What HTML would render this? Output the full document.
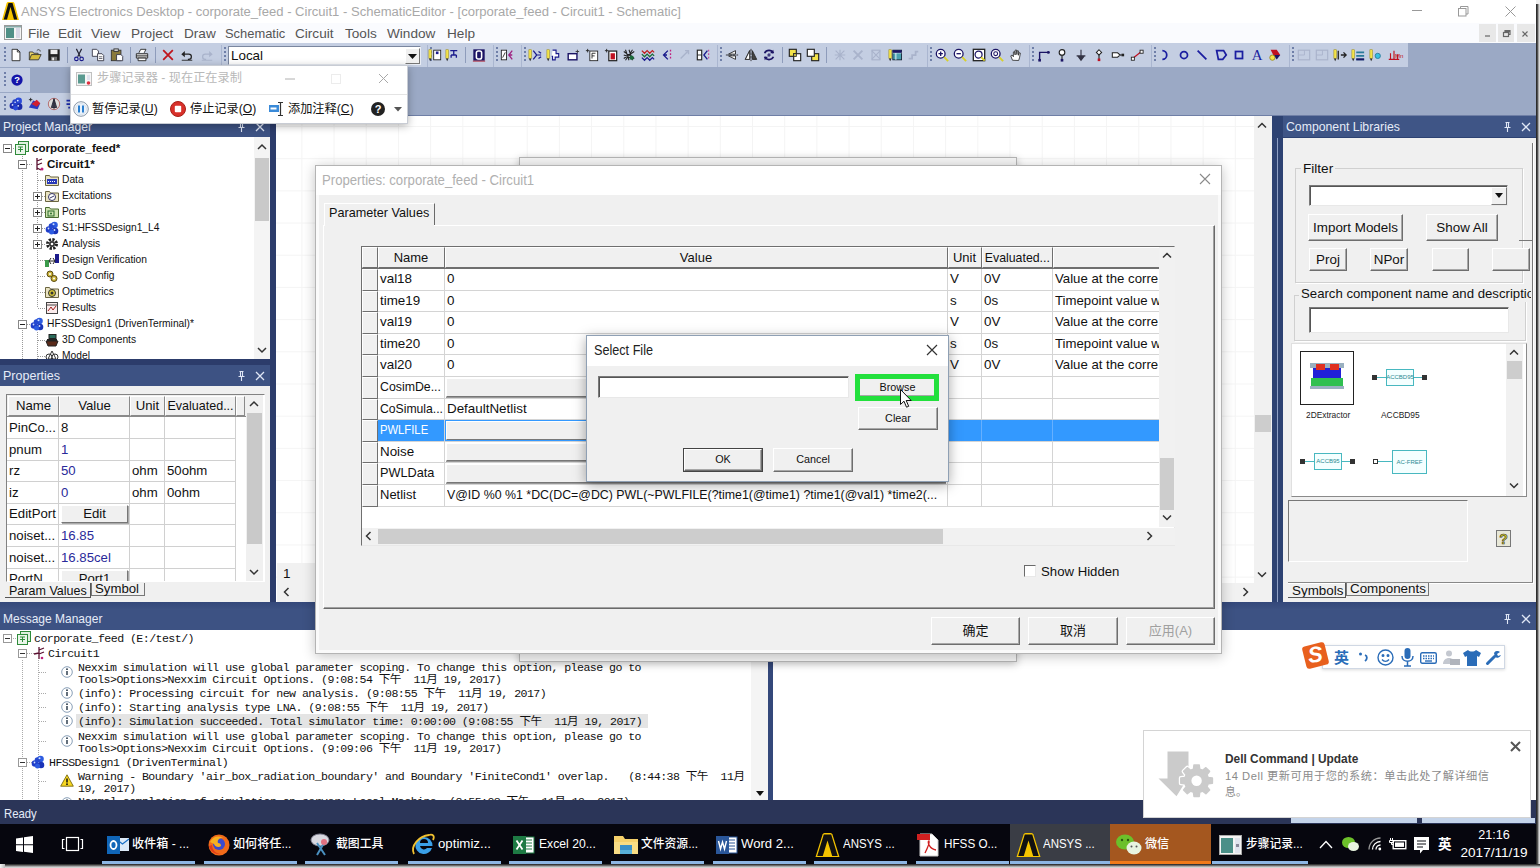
<!DOCTYPE html>
<html><head><meta charset="utf-8"><title>ANSYS Electronics Desktop</title>
<style>
*{box-sizing:border-box;margin:0;padding:0}
html,body{width:1540px;height:868px;overflow:hidden;background:#9aa8c6}
body{font-family:"Liberation Sans","Noto Sans CJK SC",sans-serif;font-size:13px;color:#111;position:relative}
.a{position:absolute}
.t{position:absolute;white-space:pre;line-height:1}
svg{position:absolute;overflow:visible}
.mn{top:27px;font-size:13.6px;color:#555}
</style></head><body>
<!-- 01_title.html -->
<div class="a" style="left:0;top:0;width:1540px;height:23px;background:#fff"></div>
<svg style="left:2px;top:2px" width="17" height="18" viewBox="0 0 17 18"><path d="M4.500 1.500C5 .3 5.500 0 6.500 0h4c1 0 1.500.3 2 1.500L17 18H0z" fill="#f5c400"/><path d="M6.500 1h4l4.800 16.500h-3.300L8.500 5 5 17.500H1.700z" fill="#111"/></svg>
<div class="t" style="left:21px;top:5px;font-size:13.05px;color:#a8a8a8">ANSYS Electronics Desktop - corporate_feed - Circuit1 - SchematicEditor - [corporate_feed - Circuit1 - Schematic]</div>
<svg style="left:1412px;top:5px" width="110" height="12" viewBox="0 0 110 12" fill="none" stroke="#999" stroke-width="1"><path d="M0 5.500h10"/><rect x="46.500" y="3.500" width="7.500" height="7.500"/><path d="M48.500 3.500v-2h7.500v7.500h-2"/><path d="M93.500 1.500l10 10M103.500 1.500l-10 10"/></svg>

<!-- 02_menu.html -->
<div class="a" style="left:0;top:23px;width:1540px;height:20px;background:#fafbfe"></div>
<svg style="left:4px;top:25px" width="18" height="15" viewBox="0 0 18 15"><rect x="0.500" y="0.500" width="17" height="14" fill="#f4f4f4" stroke="#999"/><rect x="2" y="3" width="8" height="10" fill="#4f8f86"/><rect x="12" y="3" width="4" height="10" fill="#d8d8e6"/><rect x="1" y="1" width="16" height="1.500" fill="#8aa"/></svg>
<div class="t mn" style="left:28px">File</div><div class="t mn" style="left:58px">Edit</div><div class="t mn" style="left:91px">View</div><div class="t mn" style="left:131px">Project</div><div class="t mn" style="left:184px">Draw</div><div class="t mn" style="left:225px;transform:scaleX(.95);transform-origin:0 0">Schematic</div><div class="t mn" style="left:295px">Circuit</div><div class="t mn" style="left:345px">Tools</div><div class="t mn" style="left:387px">Window</div><div class="t mn" style="left:447px">Help</div>
<div class="a" style="left:1479px;top:24px;width:17px;height:18px;background:#e8e8e8"></div><div class="a" style="left:1498px;top:24px;width:16px;height:18px;background:#e8e8e8"></div><div class="a" style="left:1517px;top:24px;width:18px;height:18px;background:#e8e8e8"></div>
<svg style="left:1479px;top:24px" width="56" height="18" viewBox="0 0 56 18" fill="none" stroke="#666" stroke-width="1.200"><path d="M6 12h5"/><rect x="24.500" y="8.500" width="5" height="4"/><path d="M26 8.500v-2h5v4h-1.500M26 7.300h5"/><path d="M43.500 7.500l5 5M48.500 7.500l-5 5"/></svg>

<!-- 03_toolbars.html -->
<div class="a" style="left:0;top:43px;width:1540px;height:75px;background:#9ba9c5"></div>
<div class="a" style="left:0;top:43px;width:1408px;height:24px;background:#c4cee2"></div>
<div class="a" style="left:0;top:68px;width:30px;height:24px;background:#c4cee2"></div>
<div class="a" style="left:0;top:93px;width:80px;height:22px;background:#c4cee2"></div>
<div class="a" style="left:221px;top:45px;width:1px;height:22px;background:#aab6d0"></div>
<div class="a" style="left:427px;top:45px;width:1px;height:22px;background:#aab6d0"></div>
<div class="a" style="left:493px;top:45px;width:1px;height:22px;background:#aab6d0"></div>
<div class="a" style="left:521px;top:45px;width:1px;height:22px;background:#aab6d0"></div>
<div class="a" style="left:717px;top:45px;width:1px;height:22px;background:#aab6d0"></div>
<div class="a" style="left:927px;top:45px;width:1px;height:22px;background:#aab6d0"></div>
<div class="a" style="left:1029px;top:45px;width:1px;height:22px;background:#aab6d0"></div>
<div class="a" style="left:1151px;top:45px;width:1px;height:22px;background:#aab6d0"></div>
<div class="a" style="left:1289px;top:45px;width:1px;height:22px;background:#aab6d0"></div>
<div class="a" style="left:4px;top:47px;width:2px;height:16px;background:repeating-linear-gradient(#6f7fa8 0 2px,transparent 2px 4px)"></div>
<div class="a" style="left:224px;top:47px;width:2px;height:16px;background:repeating-linear-gradient(#6f7fa8 0 2px,transparent 2px 4px)"></div>
<div class="a" style="left:430px;top:47px;width:2px;height:16px;background:repeating-linear-gradient(#6f7fa8 0 2px,transparent 2px 4px)"></div>
<div class="a" style="left:496px;top:47px;width:2px;height:16px;background:repeating-linear-gradient(#6f7fa8 0 2px,transparent 2px 4px)"></div>
<div class="a" style="left:524px;top:47px;width:2px;height:16px;background:repeating-linear-gradient(#6f7fa8 0 2px,transparent 2px 4px)"></div>
<div class="a" style="left:720px;top:47px;width:2px;height:16px;background:repeating-linear-gradient(#6f7fa8 0 2px,transparent 2px 4px)"></div>
<div class="a" style="left:930px;top:47px;width:2px;height:16px;background:repeating-linear-gradient(#6f7fa8 0 2px,transparent 2px 4px)"></div>
<div class="a" style="left:1032px;top:47px;width:2px;height:16px;background:repeating-linear-gradient(#6f7fa8 0 2px,transparent 2px 4px)"></div>
<div class="a" style="left:1154px;top:47px;width:2px;height:16px;background:repeating-linear-gradient(#6f7fa8 0 2px,transparent 2px 4px)"></div>
<div class="a" style="left:1292px;top:47px;width:2px;height:16px;background:repeating-linear-gradient(#6f7fa8 0 2px,transparent 2px 4px)"></div>
<div class="a" style="left:4px;top:72px;width:2px;height:16px;background:repeating-linear-gradient(#6f7fa8 0 2px,transparent 2px 4px)"></div>
<div class="a" style="left:4px;top:96px;width:2px;height:16px;background:repeating-linear-gradient(#6f7fa8 0 2px,transparent 2px 4px)"></div>
<div class="a" style="left:67px;top:47px;width:1px;height:16px;background:#8e9cbb"></div>
<div class="a" style="left:130px;top:47px;width:1px;height:16px;background:#8e9cbb"></div>
<div class="a" style="left:155px;top:47px;width:1px;height:16px;background:#8e9cbb"></div>
<div class="a" style="left:465px;top:47px;width:1px;height:16px;background:#8e9cbb"></div>
<div class="a" style="left:782px;top:47px;width:1px;height:16px;background:#8e9cbb"></div>
<div class="a" style="left:826px;top:47px;width:1px;height:16px;background:#8e9cbb"></div>
<svg style="left:9px;top:48px" width="14" height="14" viewBox="0 0 16 16"><path d="M3.500 1.500h6l3 3v10h-9z" fill="#fff" stroke="#222"/><path d="M9.500 1.500v3h3" fill="none" stroke="#222"/></svg>
<svg style="left:28px;top:48px" width="14" height="14" viewBox="0 0 16 16"><path d="M1.500 13.500v-9h4l1 1.500h5v2" fill="#e8d36a" stroke="#333"/><path d="M1.500 13.500l2.500-6h11l-3 6z" fill="#d6bd3c" stroke="#333"/><path d="M10 3c2-2 4-1 4 1" fill="none" stroke="#333"/></svg>
<svg style="left:47px;top:48px" width="14" height="14" viewBox="0 0 16 16"><rect x="1.500" y="1.500" width="13" height="13" fill="#222"/><rect x="4" y="2" width="8" height="5" fill="#eee"/><rect x="4.500" y="10" width="7" height="4.500" fill="#777"/><rect x="6" y="11" width="2" height="3" fill="#eee"/></svg>
<svg style="left:72px;top:48px" width="14" height="14" viewBox="0 0 16 16"><path d="M5 1l4.500 9M11 1l-4.500 9" stroke="#223" stroke-width="1.300" fill="none"/><circle cx="5" cy="12.500" r="2" fill="none" stroke="#1a1a8c" stroke-width="1.300"/><circle cx="11" cy="12.500" r="2" fill="none" stroke="#1a1a8c" stroke-width="1.300"/></svg>
<svg style="left:91px;top:48px" width="14" height="14" viewBox="0 0 16 16"><path d="M1.500 1.500h5l2 2v6h-7z" fill="#fff" stroke="#334"/><path d="M7.500 6.500h5l2 2v6h-7z" fill="#fff" stroke="#334"/><path d="M9 10h4M9 12h4" stroke="#334" stroke-width=".8"/></svg>
<svg style="left:110px;top:48px" width="14" height="14" viewBox="0 0 16 16"><rect x="1.500" y="2.500" width="11" height="12" fill="#8a7a3a" stroke="#333"/><rect x="4.500" y="1" width="5" height="3" fill="#ccc" stroke="#333"/><path d="M7.500 7.500h5l2 2v5h-7z" fill="#fff" stroke="#334"/></svg>
<svg style="left:135px;top:48px" width="14" height="14" viewBox="0 0 16 16"><path d="M4.500 5.500l2-4h6l-2 4" fill="#fff" stroke="#222"/><path d="M1.500 6.500h13v5h-13z" fill="#ddd" stroke="#222"/><path d="M3.500 11.500h9v3h-9z" fill="#fff" stroke="#222"/><path d="M1.500 9h13" stroke="#222"/></svg>
<svg style="left:161px;top:48px" width="14" height="14" viewBox="0 0 16 16"><path d="M2.500 2.500l11 11M13.500 2.500l-11 11" stroke="#c0141c" stroke-width="2" fill="none"/></svg>
<svg style="left:180px;top:48px" width="14" height="14" viewBox="0 0 16 16"><path d="M4 7h6a3 3 0 0 1 0 6h-1" fill="none" stroke="#222" stroke-width="1.400"/><path d="M1.500 7l4-3.500v7z" fill="#222"/><path d="M2 14h12" stroke="#222"/></svg>
<svg style="left:200px;top:48px" width="14" height="14" viewBox="0 0 16 16"><path d="M12 7h-6a3 3 0 0 0 0 6h1" fill="none" stroke="#a9b3cb" stroke-width="1.400"/><path d="M14.500 7l-4-3.500v7z" fill="#a9b3cb"/><path d="M2 14h12" stroke="#a9b3cb"/></svg>
<svg style="left:428px;top:48px" width="14" height="14" viewBox="0 0 16 16"><rect x="1" y="2" width="3" height="10" fill="#f3e34a" stroke="#998a20" stroke-width=".6"/><path d="M1 12l1.500 3 1.500-3z" fill="#333"/><rect x="6.500" y="2.500" width="8" height="11" fill="#fff" stroke="#222"/><rect x="9" y="4" width="3" height="3" fill="#1a1a8c"/></svg>
<svg style="left:445px;top:48px" width="14" height="14" viewBox="0 0 16 16"><rect x="1" y="2" width="3" height="10" fill="#f3e34a" stroke="#998a20" stroke-width=".6"/><path d="M1 12l1.500 3 1.500-3z" fill="#333"/><path d="M6 3h8M10 3v5M7 8h6M7 8v3M13 8v3" stroke="#1a1a8c" stroke-width="1.500" fill="none"/></svg>
<svg style="left:472px;top:48px" width="14" height="14" viewBox="0 0 16 16"><rect x="1.500" y="1.500" width="13" height="13" fill="#1b1464"/><rect x="5" y="3.500" width="6" height="9" rx="2" fill="none" stroke="#fff" stroke-width="1.800"/><path d="M1 15h14" stroke="#b02030"/></svg>
<svg style="left:500px;top:48px" width="14" height="14" viewBox="0 0 16 16"><rect x="1.500" y="2.500" width="6" height="11" fill="#fff" stroke="#222"/><path d="M3 11l3-6" stroke="#222"/><path d="M14 3l-4 5 4 5M10 8h4" stroke="#a02080" stroke-width="1.500" fill="none"/></svg>
<svg style="left:528px;top:48px" width="14" height="14" viewBox="0 0 16 16"><rect x="1" y="2" width="3" height="10" fill="#f3e34a" stroke="#998a20" stroke-width=".6"/><path d="M1 12l1.500 3 1.500-3z" fill="#333"/><path d="M6 3l4 5-4 5M10 8h5M12 4l3 2M12 12l3-2" stroke="#1a1a8c" stroke-width="1.400" fill="none"/></svg>
<svg style="left:546px;top:48px" width="14" height="14" viewBox="0 0 16 16"><rect x="1" y="2" width="3" height="10" fill="#f3e34a" stroke="#998a20" stroke-width=".6"/><path d="M1 12l1.500 3 1.500-3z" fill="#333"/><path d="M7.500 2.500h4v4h3v4h-4v3h-3v-4h-1" fill="#fff" stroke="#1a1a8c" stroke-width="1.300"/></svg>
<svg style="left:566px;top:48px" width="14" height="14" viewBox="0 0 16 16"><rect x="2.500" y="6.500" width="10" height="7" fill="#fff" stroke="#1b1464" stroke-width="1.600"/><path d="M13 2v4M11 4h4" stroke="#333" stroke-width="1"/></svg>
<svg style="left:585px;top:48px" width="14" height="14" viewBox="0 0 16 16"><rect x="5.500" y="3.500" width="9" height="11" fill="#fff" stroke="#222"/><path d="M8 6h4M8 9h3M8 6v6" stroke="#222"/><path d="M1 3h4M3 1v4" stroke="#222"/></svg>
<svg style="left:604px;top:48px" width="14" height="14" viewBox="0 0 16 16"><rect x="5.500" y="3.500" width="9" height="11" fill="#fff" stroke="#222" stroke-width="1.400"/><rect x="7.500" y="6" width="5" height="7" fill="#c01020"/><path d="M1 3h4M3 1v4" stroke="#222"/></svg>
<svg style="left:622px;top:48px" width="14" height="14" viewBox="0 0 16 16"><path d="M2 4l12 8M2 8l12 4M2 12l12-8M4 2l4 12M8 2l4 12M12 2l-8 12" stroke="#222" stroke-width="1.200" fill="none"/><circle cx="11" cy="11" r="2.500" fill="#1a6a3a"/></svg>
<svg style="left:641px;top:48px" width="14" height="14" viewBox="0 0 16 16"><path d="M1 3l3 3 3-3 3 3 3-3 2 2" stroke="#c02020" stroke-width="1.500" fill="none"/><path d="M1 7l3 3 3-3 3 3 3-3 2 2" stroke="#1a6a3a" stroke-width="1.500" fill="none"/><path d="M1 11l3 3 3-3 3 3 3-3 2 2" stroke="#1a1a8c" stroke-width="1.500" fill="none"/></svg>
<svg style="left:660px;top:48px" width="14" height="14" viewBox="0 0 16 16"><path d="M9 3l-5 5 5 5M4 8h4" stroke="#1a1a8c" stroke-width="1.500" fill="none"/><path d="M12 2v12" stroke="#c02080" stroke-dasharray="2 2" stroke-width="1.500"/></svg>
<svg style="left:678px;top:48px" width="14" height="14" viewBox="0 0 16 16"><path d="M3 12l8-8M8 3h4v4" stroke="#a9b3cb" stroke-width="1.600" fill="none"/></svg>
<svg style="left:696px;top:48px" width="14" height="14" viewBox="0 0 16 16"><rect x="1.500" y="2.500" width="5" height="11" fill="#fff" stroke="#222" stroke-width="1.300"/><path d="M1.500 8h5" stroke="#222"/><path d="M13 3l-4 5 4 5" stroke="#1a1a8c" stroke-width="1.500" fill="none"/><path d="M14.500 2v12" stroke="#c02080" stroke-dasharray="2 2"/></svg>
<svg style="left:725px;top:48px" width="14" height="14" viewBox="0 0 16 16"><path d="M1 8h14" stroke="#222" stroke-dasharray="3 1"/><path d="M12 3v4l-8 0zM12 13v-4l-8 0z" fill="#fff" stroke="#222"/></svg>
<svg style="left:744px;top:48px" width="14" height="14" viewBox="0 0 16 16"><path d="M8 1v14" stroke="#222" stroke-dasharray="3 1"/><path d="M6.500 3v10h-5zM9.500 3v10h5z" fill="#444" stroke="#222"/><path d="M6.500 3v10h-5z" fill="#fff" stroke="#222"/></svg>
<svg style="left:762px;top:48px" width="14" height="14" viewBox="0 0 16 16"><path d="M3 6a5.500 5.500 0 0 1 10 0M13 10a5.500 5.500 0 0 1-10 0" stroke="#1b1464" stroke-width="2" fill="none"/><path d="M13 2v4h-4zM3 14v-4h4z" fill="#1b1464"/><path d="M6 8h4M8 6v4" stroke="#1b1464" stroke-width="1.300"/></svg>
<svg style="left:788px;top:48px" width="14" height="14" viewBox="0 0 16 16"><rect x="1.500" y="1.500" width="8" height="8" fill="#f3e34a" stroke="#222" stroke-width="1.300"/><rect x="6.500" y="6.500" width="8" height="8" fill="#fff" stroke="#222" stroke-width="1.300"/><rect x="6.500" y="6.500" width="3" height="3" fill="#f3e34a" stroke="#222"/></svg>
<svg style="left:806px;top:48px" width="14" height="14" viewBox="0 0 16 16"><rect x="6.500" y="6.500" width="8" height="8" fill="#f3e34a" stroke="#222" stroke-width="1.300"/><rect x="1.500" y="1.500" width="8" height="8" fill="#fff" stroke="#222" stroke-width="1.300"/></svg>
<svg style="left:833px;top:48px" width="14" height="14" viewBox="0 0 16 16"><path d="M3 3l10 10M13 3l-10 10M8 2v12M2 8h12" stroke="#a9b3cb" stroke-width="1.300"/></svg>
<svg style="left:851px;top:48px" width="14" height="14" viewBox="0 0 16 16"><path d="M3 3l10 10M13 3l-10 10" stroke="#a9b3cb" stroke-width="2.200"/></svg>
<svg style="left:869px;top:48px" width="14" height="14" viewBox="0 0 16 16"><rect x="3.500" y="2.500" width="9" height="11" fill="none" stroke="#a9b3cb" stroke-width="1.300"/><path d="M3 3l10 10M13 3l-10 10" stroke="#a9b3cb" stroke-width="1.300"/></svg>
<svg style="left:888px;top:48px" width="14" height="14" viewBox="0 0 16 16"><rect x="1" y="2" width="3" height="10" fill="#f3e34a" stroke="#998a20" stroke-width=".6"/><path d="M1 12l1.500 3 1.500-3z" fill="#333"/><rect x="5.500" y="2.500" width="10" height="11" fill="#4aa0b0" stroke="#123"/><path d="M5.500 5.500h10M9 5.500v8" stroke="#fff"/><rect x="5.500" y="2.500" width="10" height="3" fill="#1b1464"/></svg>
<svg style="left:906px;top:48px" width="14" height="14" viewBox="0 0 16 16"><path d="M3 12h4v-4h4v-4h3" stroke="#a9b3cb" stroke-width="2" fill="none"/></svg>
<svg style="left:935px;top:48px" width="14" height="14" viewBox="0 0 16 16"><circle cx="6.500" cy="6.500" r="5" fill="#fff" stroke="#1b1464" stroke-width="1.500"/><path d="M4 6.500h5M6.500 4v5" stroke="#1b1464" stroke-width="1.500"/><path d="M10.500 10.500l4.500 4.500" stroke="#d8d02a" stroke-width="2.200"/></svg>
<svg style="left:953px;top:48px" width="14" height="14" viewBox="0 0 16 16"><circle cx="6.500" cy="6.500" r="5" fill="#fff" stroke="#1b1464" stroke-width="1.500"/><path d="M4 6.500h5" stroke="#1b1464" stroke-width="1.500"/><path d="M10.500 10.500l4.500 4.500" stroke="#d8d02a" stroke-width="2.200"/></svg>
<svg style="left:972px;top:48px" width="14" height="14" viewBox="0 0 16 16"><rect x="1.500" y="1.500" width="13" height="13" fill="#fff" stroke="#222" stroke-width="1.500"/><circle cx="7.500" cy="7.500" r="4" fill="#fff" stroke="#1b1464" stroke-width="1.400"/><path d="M10.500 10.500l4 4" stroke="#d8d02a" stroke-width="2.200"/></svg>
<svg style="left:990px;top:48px" width="14" height="14" viewBox="0 0 16 16"><circle cx="6.500" cy="6.500" r="5" fill="#fff" stroke="#1b1464" stroke-width="1.500"/><circle cx="6.500" cy="6.500" r="2.200" fill="none" stroke="#1b1464" stroke-width="1.200"/><path d="M10.500 10.500l4.500 4.500" stroke="#d8d02a" stroke-width="2.200"/></svg>
<svg style="left:1009px;top:48px" width="14" height="14" viewBox="0 0 16 16"><path d="M4 14l-2-5 1.500-1 1.500 2V4.500l1.300-.5.700 4V2.500l1.400-.3.600 5.300.500-4.500 1.300.300v5l1-3 1.200.500-1 5.500-1 3z" fill="#fff" stroke="#222" stroke-width=".9"/></svg>
<svg style="left:1037px;top:48px" width="14" height="14" viewBox="0 0 16 16"><path d="M3 14v-9h9" stroke="#1b1464" stroke-width="1.600" fill="none"/><circle cx="13" cy="5" r="1.700" fill="#1b1464"/><rect x="1.500" y="12.500" width="3" height="3" fill="#1b1464"/></svg>
<svg style="left:1055px;top:48px" width="14" height="14" viewBox="0 0 16 16"><circle cx="8" cy="5" r="3.200" fill="#fff" stroke="#222" stroke-width="1.300"/><path d="M8 8v6" stroke="#222" stroke-width="1.300"/><rect x="6.500" y="12.500" width="3" height="3" fill="#1b1464"/></svg>
<svg style="left:1074px;top:48px" width="14" height="14" viewBox="0 0 16 16"><path d="M8 2v11M3 9h10M5 10l3 4 3-4z" stroke="#334" stroke-width="1.300" fill="#334"/></svg>
<svg style="left:1092px;top:48px" width="14" height="14" viewBox="0 0 16 16"><path d="M8 2l3 3-3 3-3-3z" fill="#fff" stroke="#222" stroke-width="1.200"/><path d="M8 8v5" stroke="#222" stroke-width="1.300"/><rect x="6.500" y="12" width="3" height="3" fill="#c01020"/></svg>
<svg style="left:1111px;top:48px" width="14" height="14" viewBox="0 0 16 16"><path d="M1.500 5.500h6l3 2.500-3 2.500h-6z" fill="#fff" stroke="#222" stroke-width="1.200"/><path d="M10.500 8h2" stroke="#222"/><rect x="12" y="6.500" width="3" height="3" fill="#222"/></svg>
<svg style="left:1130px;top:48px" width="14" height="14" viewBox="0 0 16 16"><path d="M3 12l10-8" stroke="#c01020" stroke-width="1.400"/><rect x="1.500" y="10.500" width="3.500" height="3.500" fill="#fff" stroke="#222"/><rect x="11.500" y="2.500" width="3.500" height="3.500" fill="#fff" stroke="#222"/></svg>
<svg style="left:1158px;top:48px" width="14" height="14" viewBox="0 0 16 16"><path d="M5 3a5 5 0 0 1 0 10" fill="none" stroke="#1b1ea0" stroke-width="2"/></svg>
<svg style="left:1177px;top:48px" width="14" height="14" viewBox="0 0 16 16"><circle cx="8" cy="8" r="4" fill="none" stroke="#1b1ea0" stroke-width="2"/></svg>
<svg style="left:1195px;top:48px" width="14" height="14" viewBox="0 0 16 16"><path d="M3 3l10 10" stroke="#1b1ea0" stroke-width="2"/></svg>
<svg style="left:1214px;top:48px" width="14" height="14" viewBox="0 0 16 16"><path d="M3 3h8l3 5-4 5h-5z" fill="none" stroke="#1b1ea0" stroke-width="2"/></svg>
<svg style="left:1232px;top:48px" width="14" height="14" viewBox="0 0 16 16"><rect x="4" y="4" width="8" height="8" fill="none" stroke="#1b1ea0" stroke-width="2"/></svg>
<svg style="left:1250px;top:48px" width="14" height="14" viewBox="0 0 16 16"><text x="8" y="14" font-family="Liberation Serif,serif" font-size="17" text-anchor="middle" fill="#1b1ea0">A</text></svg>
<svg style="left:1268px;top:48px" width="14" height="14" viewBox="0 0 16 16"><path d="M3 2h7l4 6h-8z" fill="#c01020"/><path d="M6 8h8l-4 5z" fill="#1b1464"/><circle cx="5" cy="11" r="3" fill="#f3e34a" stroke="#998a20"/></svg>
<svg style="left:1297px;top:48px" width="14" height="14" viewBox="0 0 16 16"><rect x="1.500" y="2.500" width="13" height="11" fill="none" stroke="#a9b3cb" stroke-width="1.300"/><path d="M1.500 8h7v-5.500" stroke="#a9b3cb" fill="none"/></svg>
<svg style="left:1315px;top:48px" width="14" height="14" viewBox="0 0 16 16"><rect x="1.500" y="2.500" width="13" height="11" fill="none" stroke="#a9b3cb" stroke-width="1.300"/><path d="M1.500 8h7v-5.500" stroke="#a9b3cb" fill="none"/></svg>
<svg style="left:1333px;top:48px" width="14" height="14" viewBox="0 0 16 16"><rect x="1" y="2" width="3" height="10" fill="#f3e34a" stroke="#998a20" stroke-width=".6"/><path d="M1 12l1.500 3 1.500-3z" fill="#333"/><path d="M6 3v10M9 8h6M12 5l3 3-3 3" stroke="#222" stroke-width="1.500" fill="none"/></svg>
<svg style="left:1351px;top:48px" width="14" height="14" viewBox="0 0 16 16"><rect x="1" y="2" width="3" height="10" fill="#f3e34a" stroke="#998a20" stroke-width=".6"/><path d="M1 12l1.500 3 1.500-3z" fill="#333"/><path d="M6 5h9M6 9h9M6 13h9" stroke="#2a7a9a" stroke-width="2.200"/><path d="M6 13h9" stroke="#1b1464" stroke-width="2.200"/></svg>
<svg style="left:1369px;top:48px" width="14" height="14" viewBox="0 0 16 16"><rect x="1" y="2" width="3" height="10" fill="#f3e34a" stroke="#998a20" stroke-width=".6"/><path d="M1 12l1.500 3 1.500-3z" fill="#333"/><circle cx="10" cy="9" r="3" fill="#38c0e0" stroke="#2a7a9a"/></svg>
<svg style="left:1387px;top:48px" width="14" height="14" viewBox="0 0 16 16"><path d="M2 13h12M4 13V6M8 13V3M12 13V7" stroke="#c01020" stroke-width="1.300"/><text x="9" y="11" font-size="7" fill="#c01020" font-family="Liberation Sans,sans-serif">Mn</text></svg>
<div class="a" style="left:228px;top:46px;width:193px;height:19px;background:#fff;border:1px solid #7a869f;border-right-color:#e8ecf4;border-bottom-color:#e8ecf4"></div>
<div class="t" style="left:231px;top:49px;font-size:13.4px;color:#111">Local</div>
<div class="a" style="left:405px;top:48px;width:15px;height:16px;background:#f0f0f0;border:1px solid #fff;border-right-color:#777;border-bottom-color:#777"></div><svg style="left:408px;top:54px" width="9" height="5" viewBox="0 0 9 5"><path d="M0 0h9l-4.500 5z" fill="#111"/></svg>
<svg style="left:11px;top:74px" width="12" height="12" viewBox="0 0 16 16"><circle cx="8" cy="8" r="7.500" fill="#1414a8"/><text x="8" y="12.500" font-family="Liberation Sans,sans-serif" font-weight="700" font-size="12.500" text-anchor="middle" fill="#fff">?</text></svg>
<svg style="left:9px;top:97px" width="14" height="14" viewBox="0 0 16 16"><circle cx="4.500" cy="10" r="3.800" fill="#1a2ab0"/><circle cx="11" cy="4.500" r="3.800" fill="#2a4ad8"/><circle cx="11.500" cy="11" r="3.800" fill="#1a2aa8"/><circle cx="7" cy="6" r="3.300" fill="#2440c8"/><circle cx="7.500" cy="12.500" r="2.800" fill="#2a4ad8"/><circle cx="10" cy="4" r="1" fill="#e0e8ff"/><circle cx="4" cy="9" r="1" fill="#e0e8ff"/><circle cx="10.500" cy="10" r="1" fill="#e0e8ff"/><circle cx="7" cy="6" r=".9" fill="#e0e8ff"/></svg>
<svg style="left:28px;top:97px" width="14" height="14" viewBox="0 0 16 16"><path d="M1 12l5-8 8 3-3 7z" fill="#2a3ac0"/><path d="M4 8l6-5 4 4-4 4z" fill="#d02030"/><path d="M1 3h4M3 1v4" stroke="#222"/></svg>
<svg style="left:47px;top:97px" width="14" height="14" viewBox="0 0 16 16"><circle cx="8" cy="8" r="6.500" fill="#ddd" stroke="#b06060"/><path d="M8 2l-3 10h6zM8 2v12" fill="#445" stroke="#223"/></svg>
<svg style="left:63px;top:97px" width="14" height="14" viewBox="0 0 16 16"><path d="M4 4h8M4 8h8M6 12h6" stroke="#1a2ab0" stroke-width="2"/></svg>

<!-- 04_left.html -->
<div class="a" style="left:0;top:116px;width:277px;height:493px;background:#2c3c6b"></div>
<div class="a" style="left:0;top:116px;width:270px;height:21px;background:#3d5283"></div>
<div class="t" style="left:3px;top:120px;font-size:13.2px;color:#e6ecf8;transform:scaleX(.92);transform-origin:0 0">Project Manager</div>
<svg style="left:236px;top:121px" width="30" height="12" viewBox="0 0 30 12" fill="none" stroke="#dfe6f5" stroke-width="1.100"><path d="M3.500 1.500h4M4.500 1.500v5M6.500 1.500v5M2.500 6.500h6M5.500 6.500v4.500"/><path d="M20 2l8 8M28 2l-8 8" stroke-width="1.300"/></svg>
<div class="a" style="left:0;top:137px;width:270px;height:222px;background:#fff;overflow:hidden" id="pmtree">
<div class="a" style="left:22px;top:19px;width:1px;height:204px;background:repeating-linear-gradient(#999 0 1px,transparent 1px 2px)"></div>
<div class="a" style="left:37px;top:35px;width:1px;height:136px;background:repeating-linear-gradient(#999 0 1px,transparent 1px 2px)"></div>
<div class="a" style="left:37px;top:195px;width:1px;height:28px;background:repeating-linear-gradient(#999 0 1px,transparent 1px 2px)"></div>
<div class="a" style="left:11px;top:11px;width:4px;height:1px;background:repeating-linear-gradient(90deg,#999 0 1px,transparent 1px 2px)"></div>
<div class="a" style="left:27px;top:27px;width:6px;height:1px;background:repeating-linear-gradient(90deg,#999 0 1px,transparent 1px 2px)"></div>
<div class="a" style="left:27px;top:187px;width:6px;height:1px;background:repeating-linear-gradient(90deg,#999 0 1px,transparent 1px 2px)"></div>
<div class="a" style="left:38px;top:43px;width:7px;height:1px;background:repeating-linear-gradient(90deg,#999 0 1px,transparent 1px 2px)"></div>
<div class="a" style="left:38px;top:59px;width:7px;height:1px;background:repeating-linear-gradient(90deg,#999 0 1px,transparent 1px 2px)"></div>
<div class="a" style="left:38px;top:75px;width:7px;height:1px;background:repeating-linear-gradient(90deg,#999 0 1px,transparent 1px 2px)"></div>
<div class="a" style="left:38px;top:91px;width:7px;height:1px;background:repeating-linear-gradient(90deg,#999 0 1px,transparent 1px 2px)"></div>
<div class="a" style="left:38px;top:107px;width:7px;height:1px;background:repeating-linear-gradient(90deg,#999 0 1px,transparent 1px 2px)"></div>
<div class="a" style="left:38px;top:123px;width:7px;height:1px;background:repeating-linear-gradient(90deg,#999 0 1px,transparent 1px 2px)"></div>
<div class="a" style="left:38px;top:139px;width:7px;height:1px;background:repeating-linear-gradient(90deg,#999 0 1px,transparent 1px 2px)"></div>
<div class="a" style="left:38px;top:155px;width:7px;height:1px;background:repeating-linear-gradient(90deg,#999 0 1px,transparent 1px 2px)"></div>
<div class="a" style="left:38px;top:171px;width:7px;height:1px;background:repeating-linear-gradient(90deg,#999 0 1px,transparent 1px 2px)"></div>
<div class="a" style="left:38px;top:203px;width:7px;height:1px;background:repeating-linear-gradient(90deg,#999 0 1px,transparent 1px 2px)"></div>
<div class="a" style="left:38px;top:219px;width:7px;height:1px;background:repeating-linear-gradient(90deg,#999 0 1px,transparent 1px 2px)"></div>
<svg style="left:3px;top:7px" width="9" height="9" viewBox="0 0 9 9"><rect x=".5" y=".5" width="8" height="8" fill="#fff" stroke="#888"/><path d="M2 4.500h5" stroke="#222"/></svg>
<svg style="left:15px;top:4px" width="14" height="14" viewBox="0 0 14 14"><rect x="3.500" y=".5" width="10" height="10" fill="#dff0df" stroke="#2e8b3a"/><rect x=".5" y="3.500" width="10" height="10" fill="#eaf6ea" stroke="#2e8b3a"/><path d="M3 6h5M3 8.500h5M5.500 6v5" stroke="#2e8b3a"/></svg>
<div class="t" style="left:32px;top:5px;font-size:11.6px;font-weight:700;color:#111">corporate_feed*</div>
<svg style="left:18px;top:23px" width="9" height="9" viewBox="0 0 9 9"><rect x=".5" y=".5" width="8" height="8" fill="#fff" stroke="#888"/><path d="M2 4.500h5" stroke="#222"/></svg>
<svg style="left:32px;top:20px" width="14" height="14" viewBox="0 0 14 14"><path d="M5 1v12M5 4l5-2M5 8l5-2M5 11l4 2" stroke="#5a1030" stroke-width="1.300" fill="none"/><circle cx="10" cy="12" r="1.500" fill="#c0207a"/></svg>
<div class="t" style="left:47px;top:21px;font-size:11.6px;font-weight:700;color:#111">Circuit1*</div>
<svg style="left:45px;top:36px" width="14" height="14" viewBox="0 0 14 14"><path d="M.5 12.500v-10h4l1 1.500h8v8.500z" fill="#e9e3c2" stroke="#6b6540"/><rect x="2" y="6" width="10" height="5" fill="#2a3ab8"/><path d="M3 8.500h8" stroke="#fff" stroke-dasharray="1 1"/></svg>
<div class="t" style="left:62px;top:37px;font-size:11.4px;transform:scaleX(.9);transform-origin:0 0;color:#111">Data</div>
<svg style="left:33px;top:55px" width="9" height="9" viewBox="0 0 9 9"><rect x=".5" y=".5" width="8" height="8" fill="#fff" stroke="#888"/><path d="M2 4.500h5M4.500 2v5" stroke="#222"/></svg>
<svg style="left:45px;top:52px" width="14" height="14" viewBox="0 0 14 14"><path d="M.5 12.500v-10h4l1 1.500h8v8.500z" fill="#e9e3c2" stroke="#6b6540"/><circle cx="7" cy="8" r="3.500" fill="#fff" stroke="#336"/><path d="M5 9l4-2" stroke="#336"/></svg>
<div class="t" style="left:62px;top:53px;font-size:11.4px;transform:scaleX(.9);transform-origin:0 0;color:#111">Excitations</div>
<svg style="left:33px;top:71px" width="9" height="9" viewBox="0 0 9 9"><rect x=".5" y=".5" width="8" height="8" fill="#fff" stroke="#888"/><path d="M2 4.500h5M4.500 2v5" stroke="#222"/></svg>
<svg style="left:45px;top:68px" width="14" height="14" viewBox="0 0 14 14"><path d="M.5 12.500v-10h4l1 1.500h8v8.500z" fill="#cfe3b0" stroke="#4a6b30"/><rect x="3" y="6" width="6" height="5" fill="none" stroke="#2a6b2a"/><circle cx="6" cy="8.500" r="1" fill="#2a6b2a"/></svg>
<div class="t" style="left:62px;top:69px;font-size:11.4px;transform:scaleX(.9);transform-origin:0 0;color:#111">Ports</div>
<svg style="left:33px;top:87px" width="9" height="9" viewBox="0 0 9 9"><rect x=".5" y=".5" width="8" height="8" fill="#fff" stroke="#888"/><path d="M2 4.500h5M4.500 2v5" stroke="#222"/></svg>
<svg style="left:45px;top:84px" width="14" height="14" viewBox="0 0 14 14"><circle cx="4" cy="8.500" r="3.300" fill="#1e3cc8"/><circle cx="9.500" cy="4" r="3.300" fill="#2d5be0"/><circle cx="10" cy="10" r="3.300" fill="#1a34b8"/><circle cx="6.500" cy="5" r="2.800" fill="#2448d0"/><circle cx="6.500" cy="11" r="2.500" fill="#2d5be0"/><circle cx="8.500" cy="3.200" r="1" fill="#cfe0ff"/><circle cx="3.500" cy="7.500" r=".9" fill="#cfe0ff"/><circle cx="9.500" cy="9" r=".9" fill="#cfe0ff"/></svg>
<div class="t" style="left:62px;top:85px;font-size:11.4px;transform:scaleX(.9);transform-origin:0 0;color:#111">S1:HFSSDesign1_L4</div>
<svg style="left:33px;top:103px" width="9" height="9" viewBox="0 0 9 9"><rect x=".5" y=".5" width="8" height="8" fill="#fff" stroke="#888"/><path d="M2 4.500h5M4.500 2v5" stroke="#222"/></svg>
<svg style="left:45px;top:100px" width="14" height="14" viewBox="0 0 14 14"><circle cx="7" cy="7" r="4.500" fill="none" stroke="#222" stroke-width="3" stroke-dasharray="2.200 1.300"/><circle cx="7" cy="7" r="3" fill="#333"/><circle cx="7" cy="7" r="1.300" fill="#fff"/></svg>
<div class="t" style="left:62px;top:101px;font-size:11.4px;transform:scaleX(.9);transform-origin:0 0;color:#111">Analysis</div>
<svg style="left:45px;top:116px" width="14" height="14" viewBox="0 0 14 14"><rect x="0" y="7" width="4" height="7" fill="#3a9a4a"/><rect x="10" y="1" width="4" height="9" fill="#1b1a8c"/><path d="M4 8h6M6 5l-2 3 2 3M8 5l2 3-2 3" stroke="#222" fill="none"/></svg>
<div class="t" style="left:62px;top:117px;font-size:11.4px;transform:scaleX(.9);transform-origin:0 0;color:#111">Design Verification</div>
<svg style="left:45px;top:132px" width="14" height="14" viewBox="0 0 14 14"><circle cx="5" cy="5" r="3" fill="#c9b23a" stroke="#5a4a10"/><circle cx="9" cy="9.500" r="3" fill="#c9b23a" stroke="#5a4a10"/><circle cx="5" cy="5" r="1" fill="#fff"/><circle cx="9" cy="9.500" r="1" fill="#fff"/></svg>
<div class="t" style="left:62px;top:133px;font-size:11.4px;transform:scaleX(.9);transform-origin:0 0;color:#111">SoD Config</div>
<svg style="left:45px;top:148px" width="14" height="14" viewBox="0 0 14 14"><path d="M.5 12.500v-10h4l1 1.500h8v8.500z" fill="#e9e3c2" stroke="#6b6540"/><circle cx="7" cy="8" r="3.500" fill="#d8c83a" stroke="#333"/><circle cx="7" cy="8" r="1.500" fill="#333"/></svg>
<div class="t" style="left:62px;top:149px;font-size:11.4px;transform:scaleX(.9);transform-origin:0 0;color:#111">Optimetrics</div>
<svg style="left:45px;top:164px" width="14" height="14" viewBox="0 0 14 14"><rect x="1.500" y="1.500" width="11" height="11" fill="#fbecec" stroke="#444"/><path d="M1.500 4h11" stroke="#444"/><path d="M3 10l3-4 2 3 3-4" stroke="#a02020" fill="none"/></svg>
<div class="t" style="left:62px;top:165px;font-size:11.4px;transform:scaleX(.9);transform-origin:0 0;color:#111">Results</div>
<svg style="left:18px;top:183px" width="9" height="9" viewBox="0 0 9 9"><rect x=".5" y=".5" width="8" height="8" fill="#fff" stroke="#888"/><path d="M2 4.500h5" stroke="#222"/></svg>
<svg style="left:30px;top:180px" width="14" height="14" viewBox="0 0 14 14"><circle cx="4" cy="8.500" r="3.300" fill="#1e3cc8"/><circle cx="9.500" cy="4" r="3.300" fill="#2d5be0"/><circle cx="10" cy="10" r="3.300" fill="#1a34b8"/><circle cx="6.500" cy="5" r="2.800" fill="#2448d0"/><circle cx="6.500" cy="11" r="2.500" fill="#2d5be0"/><circle cx="8.500" cy="3.200" r="1" fill="#cfe0ff"/><circle cx="3.500" cy="7.500" r=".9" fill="#cfe0ff"/><circle cx="9.500" cy="9" r=".9" fill="#cfe0ff"/></svg>
<div class="t" style="left:47px;top:181px;font-size:11.4px;transform:scaleX(.9);transform-origin:0 0;color:#111">HFSSDesign1 (DrivenTerminal)*</div>
<svg style="left:45px;top:196px" width="14" height="14" viewBox="0 0 14 14"><path d="M1 8h12l-2 5h-8z" fill="#5a2a1a" stroke="#222"/><rect x="4" y="1.500" width="7" height="4" fill="#2a6a5a" stroke="#222"/><path d="M2 7h10" stroke="#222" stroke-width="2"/></svg>
<div class="t" style="left:62px;top:197px;font-size:11.4px;transform:scaleX(.9);transform-origin:0 0;color:#111">3D Components</div>
<svg style="left:45px;top:212px" width="14" height="14" viewBox="0 0 14 14"><circle cx="4" cy="8" r="3" fill="#fff" stroke="#333"/><circle cx="10" cy="8" r="3" fill="#fff" stroke="#333"/><path d="M7 2l4 8h-8z" fill="none" stroke="#333"/></svg>
<div class="t" style="left:62px;top:213px;font-size:11.4px;transform:scaleX(.9);transform-origin:0 0;color:#111">Model</div>
<div class="a" style="left:254px;top:0;width:16px;height:222px;background:#f4f4f4"></div>
<div class="a" style="left:255px;top:21px;width:14px;height:63px;background:#c9c9c9"></div>
<svg style="left:257px;top:6px" width="10" height="8" viewBox="0 0 10 8"><path d="M1 6l4-4 4 4" fill="none" stroke="#333" stroke-width="1.500"/></svg>
<svg style="left:257px;top:209px" width="10" height="8" viewBox="0 0 10 8"><path d="M1 2l4 4 4-4" fill="none" stroke="#333" stroke-width="1.500"/></svg>
</div>
<div class="a" style="left:0;top:365px;width:270px;height:21px;background:#3d5283"></div>
<div class="t" style="left:3px;top:369px;font-size:13.2px;color:#e6ecf8;transform:scaleX(.95);transform-origin:0 0">Properties</div>
<svg style="left:236px;top:370px" width="30" height="12" viewBox="0 0 30 12" fill="none" stroke="#dfe6f5" stroke-width="1.100"><path d="M3.500 1.500h4M4.500 1.500v5M6.500 1.500v5M2.500 6.500h6M5.500 6.500v4.500"/><path d="M20 2l8 8M28 2l-8 8" stroke-width="1.300"/></svg>
<div class="a" style="left:0;top:386px;width:270px;height:216px;background:#f0f0f0"></div>
<div class="a" style="left:6px;top:394px;width:259px;height:188px;border:1px solid #828282;border-right-color:#fff;border-bottom-color:#fff;background:#fff;overflow:hidden" id="ptab">
<div class="a" style="left:0;top:0;width:239px;height:22px;background:#f0f0f0;border-bottom:1px solid #8a8a8a"></div>
<div class="a" style="left:1px;top:1px;width:51px;height:20px;background:#f0f0f0;border:1px solid #fff;border-right-color:#8a8a8a;border-bottom-color:#8a8a8a"></div>
<div class="t" style="left:1px;width:51px;text-align:center;top:4px;font-size:13.200px;color:#111;transform:scaleX(1)">Name</div>
<div class="a" style="left:52px;top:1px;width:71px;height:20px;background:#f0f0f0;border:1px solid #fff;border-right-color:#8a8a8a;border-bottom-color:#8a8a8a"></div>
<div class="t" style="left:52px;width:71px;text-align:center;top:4px;font-size:13.200px;color:#111;transform:scaleX(1)">Value</div>
<div class="a" style="left:123px;top:1px;width:35px;height:20px;background:#f0f0f0;border:1px solid #fff;border-right-color:#8a8a8a;border-bottom-color:#8a8a8a"></div>
<div class="t" style="left:123px;width:35px;text-align:center;top:4px;font-size:13.200px;color:#111;transform:scaleX(1)">Unit</div>
<div class="a" style="left:158px;top:1px;width:71px;height:20px;background:#f0f0f0;border:1px solid #fff;border-right-color:#8a8a8a;border-bottom-color:#8a8a8a"></div>
<div class="t" style="left:158px;width:71px;text-align:center;top:4px;font-size:13.200px;color:#111;transform:scaleX(0.95)">Evaluated...</div>
<div class="a" style="left:229px;top:1px;width:9px;height:20px;background:#f0f0f0;border:1px solid #fff;border-right-color:#8a8a8a;border-bottom-color:#8a8a8a"></div>
<div class="a" style="left:0;top:43px;width:229px;height:1px;background:#d0d0d0"></div>
<div class="t" style="left:2px;top:26px;font-size:13.200px">PinCo...</div>
<div class="t" style="left:54px;top:26px;font-size:13.200px;color:#111">8</div>
<div class="a" style="left:0;top:65px;width:229px;height:1px;background:#d0d0d0"></div>
<div class="t" style="left:2px;top:48px;font-size:13.200px">pnum</div>
<div class="t" style="left:54px;top:48px;font-size:13.200px;color:#2a2a9a">1</div>
<div class="a" style="left:0;top:86px;width:229px;height:1px;background:#d0d0d0"></div>
<div class="t" style="left:2px;top:69px;font-size:13.200px">rz</div>
<div class="t" style="left:54px;top:69px;font-size:13.200px;color:#2a2a9a">50</div>
<div class="t" style="left:125px;top:69px;font-size:13.200px">ohm</div>
<div class="t" style="left:160px;top:69px;font-size:13.200px">50ohm</div>
<div class="a" style="left:0;top:108px;width:229px;height:1px;background:#d0d0d0"></div>
<div class="t" style="left:2px;top:91px;font-size:13.200px">iz</div>
<div class="t" style="left:54px;top:91px;font-size:13.200px;color:#2a2a9a">0</div>
<div class="t" style="left:125px;top:91px;font-size:13.200px">ohm</div>
<div class="t" style="left:160px;top:91px;font-size:13.200px">0ohm</div>
<div class="a" style="left:0;top:129px;width:229px;height:1px;background:#d0d0d0"></div>
<div class="t" style="left:2px;top:112px;font-size:13.200px">EditPort</div>
<div class="a" style="left:54px;top:110px;width:67px;height:18px;background:#f0f0f0;border:1px solid #fff;border-right-color:#777;border-bottom-color:#777;box-shadow:1px 1px 0 #aaa"></div><div class="t" style="left:54px;width:67px;text-align:center;top:112px;font-size:13.200px">Edit</div>
<div class="a" style="left:0;top:151px;width:229px;height:1px;background:#d0d0d0"></div>
<div class="t" style="left:2px;top:134px;font-size:13.200px">noiset...</div>
<div class="t" style="left:54px;top:134px;font-size:13.200px;color:#2a2a9a">16.85</div>
<div class="a" style="left:0;top:173px;width:229px;height:1px;background:#d0d0d0"></div>
<div class="t" style="left:2px;top:156px;font-size:13.200px">noiset...</div>
<div class="t" style="left:54px;top:156px;font-size:13.200px;color:#2a2a9a">16.85cel</div>
<div class="a" style="left:0;top:194px;width:229px;height:1px;background:#d0d0d0"></div>
<div class="t" style="left:2px;top:177px;font-size:13.200px">PortN...</div>
<div class="a" style="left:54px;top:175px;width:67px;height:18px;background:#f0f0f0;border:1px solid #fff;border-right-color:#777;border-bottom-color:#777;box-shadow:1px 1px 0 #aaa"></div><div class="t" style="left:54px;width:67px;text-align:center;top:177px;font-size:13.200px">Port1</div>
<div class="a" style="left:51px;top:22px;width:1px;height:170px;background:#d0d0d0"></div>
<div class="a" style="left:122px;top:22px;width:1px;height:170px;background:#d0d0d0"></div>
<div class="a" style="left:157px;top:22px;width:1px;height:170px;background:#d0d0d0"></div>
<div class="a" style="left:228px;top:22px;width:1px;height:170px;background:#d0d0d0"></div>
<div class="a" style="left:239px;top:0;width:17px;height:190px;background:#f0f0f0"></div>
<div class="a" style="left:240px;top:18px;width:15px;height:131px;background:#c9c9c9"></div>
<svg style="left:242px;top:5px" width="10" height="8" viewBox="0 0 10 8"><path d="M1 6l4-4 4 4" fill="none" stroke="#333" stroke-width="1.500"/></svg>
<svg style="left:242px;top:173px" width="10" height="8" viewBox="0 0 10 8"><path d="M1 2l4 4 4-4" fill="none" stroke="#333" stroke-width="1.500"/></svg>
</div>
<div class="t" style="left:9px;top:584px;font-size:13.200px;color:#111;transform:scaleX(.95);transform-origin:0 0">Param Values</div>
<div class="a" style="left:5px;top:597px;width:86px;height:1px;background:#555"></div><div class="a" style="left:90px;top:583px;width:1px;height:15px;background:#555"></div>
<div class="a" style="left:91px;top:583px;width:54px;height:13px;border:1px solid #777;border-top:none;background:#f0f0f0"></div><div class="t" style="left:95px;top:582px;font-size:13.200px;color:#111">Symbol</div>

<!-- 05_right.html -->
<div class="a" style="left:0;top:115px;width:1536px;height:1px;background:#6f7fa6"></div>
<div class="a" style="left:276px;top:116px;width:996px;height:486px;background:#fff;background-image:linear-gradient(#f4f4f4 1px,transparent 1px),linear-gradient(90deg,#f4f4f4 1px,transparent 1px);background-size:32.2px 32.2px;background-position:25.400px 10px"></div>
<div class="a" style="left:1254px;top:116px;width:18px;height:467px;background:#f1f1f1"></div>
<div class="a" style="left:1255px;top:415px;width:16px;height:17px;background:#cdcdcd"></div>
<svg style="left:1257px;top:121px" width="10" height="10" viewBox="0 0 10 10"><path d="M1 6.500l4-4 4 4" fill="none" stroke="#333" stroke-width="1.5"/></svg>
<svg style="left:1257px;top:570px" width="10" height="10" viewBox="0 0 10 10"><path d="M1 2.500l4 4 4-4" fill="none" stroke="#333" stroke-width="1.5"/></svg>
<div class="a" style="left:277px;top:583px;width:995px;height:19px;background:#f1f1f1"></div>
<div class="a" style="left:277px;top:563px;width:40px;height:20px;background:#f1f1f1"></div>
<div class="t" style="left:283px;top:567px;font-size:13.500px;color:#111">1</div>
<svg style="left:282px;top:587px" width="10" height="10" viewBox="0 0 10 10"><path d="M6.500 1l-4 4 4 4" fill="none" stroke="#333" stroke-width="1.5"/></svg>
<svg style="left:1240px;top:587px" width="10" height="10" viewBox="0 0 10 10"><path d="M3.500 1l4 4-4 4" fill="none" stroke="#333" stroke-width="1.5"/></svg>
<div class="a" style="left:1272px;top:116px;width:268px;height:493px;background:#2d4272"></div>
<div class="a" style="left:1277px;top:138px;width:1px;height:464px;background:#8fa0c4"></div>
<div class="a" style="left:277px;top:602px;width:995px;height:7px;background:#2d4272"></div>
<div class="a" style="left:1283px;top:116px;width:253px;height:21px;background:#3f5586"></div>
<div class="t" style="left:1286px;top:120px;font-size:13.200px;color:#e6ecf8;transform:scaleX(.93);transform-origin:0 0">Component Libraries</div>
<svg style="left:1502px;top:121px" width="30" height="12" viewBox="0 0 30 12" fill="none" stroke="#dfe6f5" stroke-width="1.100"><path d="M3.500 1.500h4M4.500 1.500v5M6.500 1.500v5M2.500 6.500h6M5.500 6.500v4.500"/><path d="M20 2l8 8M28 2l-8 8" stroke-width="1.300"/></svg>
<div class="a" style="left:1283px;top:138px;width:253px;height:464px;background:#f0f0f0;overflow:hidden" id="cl">
<div class="a" style="left:249px;top:5px;width:1px;height:440px;background:#777"></div>
<div class="a" style="left:250px;top:5px;width:1px;height:441px;background:#fff"></div>
<div class="a" style="left:5px;top:444px;width:245px;height:1px;background:#888"></div>
<div class="a" style="left:5px;top:445px;width:246px;height:1px;background:#fff"></div>
<div class="a" style="left:12px;top:30px;width:228px;height:115px;border:1px solid #d0d0d0;box-shadow:1px 1px 0 #fff"></div>
<div class="a" style="left:18px;top:24px;width:34px;height:14px;background:#f0f0f0"></div>
<div class="t" style="left:20px;top:24px;font-size:13.6px;">Filter</div>
<div class="a" style="left:26px;top:47px;width:199px;height:21px;background:#fff;border:1px solid #7a7a7a;border-right-color:#e8e8e8;border-bottom-color:#e8e8e8;box-shadow:inset 1px 1px 0 #555"></div>
<div class="a" style="left:208px;top:49px;width:16px;height:18px;background:#f0f0f0;border:1px solid #fff;border-right-color:#777;border-bottom-color:#777"></div>
<svg style="left:212px;top:55px" width="8" height="5" viewBox="0 0 8 5"><path d="M0 0h8l-4 5z" fill="#111"/></svg>
<div class="a" style="left:25px;top:76px;width:95px;height:27px;background:#f0f0f0;border:1px solid #fff;border-right-color:#6e6e6e;border-bottom-color:#6e6e6e;box-shadow:inset -1px -1px 0 #a8a8a8"></div><div class="t" style="left:25px;width:95px;text-align:center;top:83px;font-size:13.400px">Import Models</div>
<div class="a" style="left:143px;top:76px;width:72px;height:27px;background:#f0f0f0;border:1px solid #fff;border-right-color:#6e6e6e;border-bottom-color:#6e6e6e;box-shadow:inset -1px -1px 0 #a8a8a8"></div><div class="t" style="left:143px;width:72px;text-align:center;top:83px;font-size:13.400px">Show All</div>
<div class="a" style="left:26px;top:110px;width:38px;height:23px;background:#f0f0f0;border:1px solid #fff;border-right-color:#6e6e6e;border-bottom-color:#6e6e6e;box-shadow:inset -1px -1px 0 #a8a8a8"></div><div class="t" style="left:26px;width:38px;text-align:center;top:115px;font-size:13.400px">Proj</div>
<div class="a" style="left:87px;top:110px;width:38px;height:23px;background:#f0f0f0;border:1px solid #fff;border-right-color:#6e6e6e;border-bottom-color:#6e6e6e;box-shadow:inset -1px -1px 0 #a8a8a8"></div><div class="t" style="left:87px;width:38px;text-align:center;top:115px;font-size:13.400px">NPor</div>
<div class="a" style="left:149px;top:110px;width:37px;height:23px;background:#f0f0f0;border:1px solid #fff;border-right-color:#6e6e6e;border-bottom-color:#6e6e6e;box-shadow:inset -1px -1px 0 #a8a8a8"></div>
<div class="a" style="left:209px;top:110px;width:38px;height:23px;background:#f0f0f0;border:1px solid #fff;border-right-color:#6e6e6e;border-bottom-color:#6e6e6e;box-shadow:inset -1px -1px 0 #a8a8a8"></div>
<div class="a" style="left:236px;top:102px;width:14px;height:1px;background:#777"></div>
<div class="a" style="left:11px;top:157px;width:232px;height:46px;border:1px solid #d0d0d0;box-shadow:1px 1px 0 #fff"></div>
<div class="a" style="left:16px;top:150px;width:232px;height:14px;background:#f0f0f0"></div>
<div class="t" style="left:18px;top:149px;font-size:13.6px;transform:scaleX(.97);transform-origin:0 0;width:237px;overflow:hidden">Search component name and description</div>
<div class="a" style="left:26px;top:169px;width:200px;height:26px;background:#fff;border:1px solid #7a7a7a;border-right-color:#e8e8e8;border-bottom-color:#e8e8e8;box-shadow:inset 1px 1px 0 #555"></div>
<div class="a" style="left:8px;top:205px;width:236px;height:154px;background:#fff;border:1px solid #8a8a8a;border-left-color:#e0e0e0;border-top-color:#e0e0e0"></div>
<div class="a" style="left:223px;top:206px;width:17px;height:152px;background:#f1f1f1"></div>
<div class="a" style="left:224px;top:223px;width:15px;height:18px;background:#cdcdcd"></div>
<svg style="left:226px;top:210px" width="10" height="10" viewBox="0 0 10 10"><path d="M1 6.500l4-4 4 4" fill="none" stroke="#333" stroke-width="1.500"/></svg>
<svg style="left:226px;top:343px" width="10" height="10" viewBox="0 0 10 10"><path d="M1 2.500l4 4 4-4" fill="none" stroke="#333" stroke-width="1.500"/></svg>
<div class="a" style="left:17px;top:213px;width:54px;height:54px;background:#fff;border:1px solid #222"></div>
<div class="a" style="left:27px;top:225px;width:34px;height:5px;background:#9ab0c0"></div>
<div class="a" style="left:30px;top:230px;width:28px;height:10px;background:#2020d8"></div>
<div class="a" style="left:33px;top:226px;width:9px;height:6px;background:#e03020"></div>
<div class="a" style="left:47px;top:226px;width:9px;height:6px;background:#e03020"></div>
<div class="a" style="left:28px;top:240px;width:32px;height:8px;background:#30c050"></div>
<div class="a" style="left:27px;top:248px;width:34px;height:3px;background:#9ab0c0"></div>
<div class="t" style="left:23px;top:273px;font-size:8.4px;color:#222">2DExtractor</div>
<div class="a" style="left:103px;top:231px;width:28px;height:17px;background:#f4ffff;border:1px solid #48b8c0"></div><div class="t" style="left:103px;width:28px;text-align:center;top:236px;font-size:6px;color:#2a8a92">ACCBD95</div>
<div class="a" style="left:89px;top:237px;width:5px;height:5px;background:#333"></div>
<div class="a" style="left:94px;top:239px;width:9px;height:1px;background:#48b8c0"></div>
<div class="a" style="left:131px;top:239px;width:9px;height:1px;background:#48b8c0"></div>
<div class="a" style="left:139px;top:237px;width:5px;height:5px;background:#333"></div>
<div class="t" style="left:98px;top:273px;font-size:8.4px;color:#222">ACCBD95</div>
<div class="a" style="left:31px;top:315px;width:28px;height:17px;background:#f4ffff;border:1px solid #48b8c0"></div><div class="t" style="left:31px;width:28px;text-align:center;top:320px;font-size:6px;color:#2a8a92">ACCB95</div>
<div class="a" style="left:17px;top:321px;width:5px;height:5px;background:#333"></div>
<div class="a" style="left:22px;top:323px;width:9px;height:1px;background:#48b8c0"></div>
<div class="a" style="left:59px;top:323px;width:9px;height:1px;background:#48b8c0"></div>
<div class="a" style="left:67px;top:321px;width:5px;height:5px;background:#333"></div>
<div class="a" style="left:109px;top:312px;width:35px;height:24px;background:#f4ffff;border:1px solid #48b8c0"></div><div class="t" style="left:109px;width:35px;text-align:center;top:321px;font-size:6px;color:#2a8a92">AC-FREF</div>
<div class="a" style="left:90px;top:321px;width:5px;height:5px;border:1px solid #333"></div>
<div class="a" style="left:95px;top:323px;width:14px;height:1px;background:#48b8c0"></div>
<div class="a" style="left:5px;top:362px;width:180px;height:62px;border:1px solid #777;border-right-color:#fff;border-bottom-color:#fff;background:#f0f0f0"></div>
<svg style="left:213px;top:392px" width="15" height="17" viewBox="0 0 15 17"><rect x=".5" y=".5" width="14" height="16" fill="#e8e8d8" stroke="#777"/><text x="7.500" y="13.500" font-size="14" font-weight="700" text-anchor="middle" fill="#d8d020" stroke="#333" stroke-width=".6" font-family="Liberation Sans,sans-serif">?</text></svg>
<div class="t" style="left:9px;top:446px;font-size:13.4px;">Symbols</div>
<div class="a" style="left:5px;top:459px;width:58px;height:1px;background:#555"></div>
<div class="a" style="left:62px;top:445px;width:1px;height:15px;background:#555"></div>
<div class="a" style="left:63px;top:445px;width:83px;height:13px;border:1px solid #777;border-top:none;background:#f0f0f0"></div>
<div class="t" style="left:67px;top:444px;font-size:13.4px;">Components</div>
</div>

<!-- 06_bottom.html -->
<div class="a" style="left:0;top:602px;width:1540px;height:8px;background:linear-gradient(#34487a,#3d5283)"></div>
<div class="a" style="left:0;top:609px;width:1540px;height:22px;background:#3d5283"></div>
<div class="t" style="left:3px;top:612px;font-size:13.200px;color:#e6ecf8;transform:scaleX(.91);transform-origin:0 0">Message Manager</div>
<svg style="left:1502px;top:613px" width="30" height="12" viewBox="0 0 30 12" fill="none" stroke="#dfe6f5" stroke-width="1.100"><path d="M3.500 1.500h4M4.500 1.500v5M6.500 1.500v5M2.500 6.500h6M5.500 6.500v4.500"/><path d="M20 2l8 8M28 2l-8 8" stroke-width="1.300"/></svg>
<div class="a" style="left:0;top:630px;width:768px;height:170px;background:#fff;overflow:hidden" id="mm">
<div class="a" style="left:22px;top:30px;width:1px;height:140px;background:repeating-linear-gradient(#aaa 0 1px,transparent 1px 2px)"></div>
<div class="a" style="left:38px;top:30px;width:1px;height:96px;background:repeating-linear-gradient(#aaa 0 1px,transparent 1px 2px)"></div>
<div class="a" style="left:38px;top:140px;width:1px;height:30px;background:repeating-linear-gradient(#aaa 0 1px,transparent 1px 2px)"></div>
<div class="a" style="left:11px;top:8px;width:5px;height:1px;background:repeating-linear-gradient(90deg,#aaa 0 1px,transparent 1px 2px)"></div>
<div class="a" style="left:27px;top:23px;width:7px;height:1px;background:repeating-linear-gradient(90deg,#aaa 0 1px,transparent 1px 2px)"></div>
<div class="a" style="left:27px;top:132px;width:5px;height:1px;background:repeating-linear-gradient(90deg,#aaa 0 1px,transparent 1px 2px)"></div>
<div class="a" style="left:39px;top:42px;width:7px;height:1px;background:repeating-linear-gradient(90deg,#aaa 0 1px,transparent 1px 2px)"></div>
<div class="a" style="left:39px;top:63px;width:7px;height:1px;background:repeating-linear-gradient(90deg,#aaa 0 1px,transparent 1px 2px)"></div>
<div class="a" style="left:39px;top:77px;width:7px;height:1px;background:repeating-linear-gradient(90deg,#aaa 0 1px,transparent 1px 2px)"></div>
<div class="a" style="left:39px;top:91px;width:7px;height:1px;background:repeating-linear-gradient(90deg,#aaa 0 1px,transparent 1px 2px)"></div>
<div class="a" style="left:39px;top:111px;width:7px;height:1px;background:repeating-linear-gradient(90deg,#aaa 0 1px,transparent 1px 2px)"></div>
<div class="a" style="left:39px;top:151px;width:7px;height:1px;background:repeating-linear-gradient(90deg,#aaa 0 1px,transparent 1px 2px)"></div>
<svg style="left:3px;top:4px" width="9" height="9" viewBox="0 0 9 9"><rect x=".5" y=".5" width="8" height="8" fill="#fff" stroke="#999"/><path d="M2 4.500h5" stroke="#333"/></svg>
<svg style="left:17px;top:1px" width="14" height="14" viewBox="0 0 14 14"><rect x="3.500" y=".5" width="10" height="10" fill="#dff0df" stroke="#2e8b3a"/><rect x=".5" y="3.500" width="10" height="10" fill="#eaf6ea" stroke="#2e8b3a"/><path d="M3 6h5M3 8.500h5M5.500 6v5" stroke="#2e8b3a"/></svg>
<div class="t" style="left:34px;top:3px;font-family:'Liberation Mono','Noto Sans CJK SC',monospace;font-size:11.600px;letter-spacing:-0.560px;color:#111;">corporate_feed (E:/test/)</div>
<svg style="left:18px;top:19px" width="9" height="9" viewBox="0 0 9 9"><rect x=".5" y=".5" width="8" height="8" fill="#fff" stroke="#999"/><path d="M2 4.500h5" stroke="#333"/></svg>
<svg style="left:33px;top:16px" width="12" height="14" viewBox="0 0 12 14"><path d="M6 1v12M6 4l5-2M6 8l5-2M6 7l-5 1" stroke="#5a1030" stroke-width="1.300" fill="none"/><circle cx="9" cy="12" r="1.300" fill="#c0207a"/></svg>
<div class="t" style="left:48px;top:18px;font-family:'Liberation Mono','Noto Sans CJK SC',monospace;font-size:11.600px;letter-spacing:-0.560px;color:#111;">Circuit1</div>
<svg style="left:61px;top:36px" width="12" height="12" viewBox="0 0 12 12"><circle cx="6" cy="6" r="5.300" fill="#fff" stroke="#8aa0b8" stroke-width="1"/><path d="M6 5v4" stroke="#234" stroke-width="1.400"/><circle cx="6" cy="3.200" r=".9" fill="#234"/></svg>
<div class="t" style="left:78px;top:32px;font-family:'Liberation Mono','Noto Sans CJK SC',monospace;font-size:11.600px;letter-spacing:-0.560px;color:#111;">Nexxim simulation will use global parameter scoping. To change this option, please go to</div>
<div class="t" style="left:78px;top:44px;font-family:'Liberation Mono','Noto Sans CJK SC',monospace;font-size:11.600px;letter-spacing:-0.560px;color:#111;">Tools&gt;Options&gt;Nexxim Circuit Options. (9:08:54 下午  11月 19, 2017)</div>
<svg style="left:61px;top:57px" width="12" height="12" viewBox="0 0 12 12"><circle cx="6" cy="6" r="5.300" fill="#fff" stroke="#8aa0b8" stroke-width="1"/><path d="M6 5v4" stroke="#234" stroke-width="1.400"/><circle cx="6" cy="3.200" r=".9" fill="#234"/></svg>
<div class="t" style="left:78px;top:58px;font-family:'Liberation Mono','Noto Sans CJK SC',monospace;font-size:11.600px;letter-spacing:-0.560px;color:#111;">(info): Processing circuit for new analysis. (9:08:55 下午  11月 19, 2017)</div>
<svg style="left:61px;top:71px" width="12" height="12" viewBox="0 0 12 12"><circle cx="6" cy="6" r="5.300" fill="#fff" stroke="#8aa0b8" stroke-width="1"/><path d="M6 5v4" stroke="#234" stroke-width="1.400"/><circle cx="6" cy="3.200" r=".9" fill="#234"/></svg>
<div class="t" style="left:78px;top:72px;font-family:'Liberation Mono','Noto Sans CJK SC',monospace;font-size:11.600px;letter-spacing:-0.560px;color:#111;">(info): Starting analysis type LNA. (9:08:55 下午  11月 19, 2017)</div>
<div class="a" style="left:76px;top:84px;width:572px;height:14px;background:#e4e4e4"></div>
<svg style="left:61px;top:85px" width="12" height="12" viewBox="0 0 12 12"><circle cx="6" cy="6" r="5.300" fill="#fff" stroke="#8aa0b8" stroke-width="1"/><path d="M6 5v4" stroke="#234" stroke-width="1.400"/><circle cx="6" cy="3.200" r=".9" fill="#234"/></svg>
<div class="t" style="left:78px;top:86px;font-family:'Liberation Mono','Noto Sans CJK SC',monospace;font-size:11.600px;letter-spacing:-0.560px;color:#111;">(info): Simulation succeeded. Total simulator time: 0:00:00 (9:08:55 下午  11月 19, 2017)</div>
<svg style="left:61px;top:105px" width="12" height="12" viewBox="0 0 12 12"><circle cx="6" cy="6" r="5.300" fill="#fff" stroke="#8aa0b8" stroke-width="1"/><path d="M6 5v4" stroke="#234" stroke-width="1.400"/><circle cx="6" cy="3.200" r=".9" fill="#234"/></svg>
<div class="t" style="left:78px;top:101px;font-family:'Liberation Mono','Noto Sans CJK SC',monospace;font-size:11.600px;letter-spacing:-0.560px;color:#111;">Nexxim simulation will use global parameter scoping. To change this option, please go to</div>
<div class="t" style="left:78px;top:113px;font-family:'Liberation Mono','Noto Sans CJK SC',monospace;font-size:11.600px;letter-spacing:-0.560px;color:#111;">Tools&gt;Options&gt;Nexxim Circuit Options. (9:09:06 下午  11月 19, 2017)</div>
<svg style="left:18px;top:128px" width="9" height="9" viewBox="0 0 9 9"><rect x=".5" y=".5" width="8" height="8" fill="#fff" stroke="#999"/><path d="M2 4.500h5" stroke="#333"/></svg>
<svg style="left:31px;top:125px" width="14" height="14" viewBox="0 0 14 14"><circle cx="4" cy="8.500" r="3.300" fill="#1e3cc8"/><circle cx="9.500" cy="4" r="3.300" fill="#2d5be0"/><circle cx="10" cy="10" r="3.300" fill="#1a34b8"/><circle cx="6.500" cy="5" r="2.800" fill="#2448d0"/><circle cx="6.500" cy="11" r="2.500" fill="#2d5be0"/><circle cx="8.500" cy="3.200" r="1" fill="#cfe0ff"/><circle cx="3.500" cy="7.500" r=".9" fill="#cfe0ff"/></svg>
<div class="t" style="left:49px;top:127px;font-family:'Liberation Mono','Noto Sans CJK SC',monospace;font-size:11.600px;letter-spacing:-0.560px;color:#111;">HFSSDesign1 (DrivenTerminal)</div>
<svg style="left:60px;top:144px" width="14" height="13" viewBox="0 0 14 13"><path d="M7 .8l6.300 11.400H.7z" fill="#f8d820" stroke="#7a6a10" stroke-width=".9"/><path d="M7 4.500v4" stroke="#111" stroke-width="1.500"/><circle cx="7" cy="10.200" r=".9" fill="#111"/></svg>
<div class="t" style="left:78px;top:141px;font-family:'Liberation Mono','Noto Sans CJK SC',monospace;font-size:11.600px;letter-spacing:-0.560px;color:#111;">Warning - Boundary 'air_box_radiation_boundary' and Boundary 'FiniteCond1' overlap.   (8:44:38 下午  11月</div>
<div class="t" style="left:78px;top:153px;font-family:'Liberation Mono','Noto Sans CJK SC',monospace;font-size:11.600px;letter-spacing:-0.560px;color:#111;">19, 2017)</div>
<svg style="left:61px;top:167px" width="12" height="12" viewBox="0 0 12 12"><circle cx="6" cy="6" r="5.300" fill="#fff" stroke="#8aa0b8" stroke-width="1"/><path d="M6 5v4" stroke="#234" stroke-width="1.400"/><circle cx="6" cy="3.200" r=".9" fill="#234"/></svg>
<div class="t" style="left:78px;top:166px;font-family:'Liberation Mono','Noto Sans CJK SC',monospace;font-size:11.600px;letter-spacing:-0.560px;color:#111;">Normal completion of simulation on server: Local Machine. (8:55:03 下午  11月 19, 2017)</div>
<div class="a" style="left:751px;top:0;width:17px;height:171px;background:#f4f4f4"></div>
<svg style="left:756px;top:161px" width="8" height="5" viewBox="0 0 8 5"><path d="M0 0h8l-4 5z" fill="#111"/></svg>
</div>
<div class="a" style="left:768px;top:630px;width:5px;height:170px;background:#34487a"></div>
<div class="a" style="left:773px;top:630px;width:763px;height:170px;background:#fff"></div>
<div class="a" style="left:0;top:800px;width:1540px;height:24px;background:#2b3558"></div>
<div class="t" style="left:4px;top:807px;font-size:13.200px;color:#e6ecf8;transform:scaleX(.86);transform-origin:0 0">Ready</div>
<div class="a" style="left:1291px;top:818px;width:126px;height:5px;background:#c4d4ea"></div><div class="a" style="left:1422px;top:818px;width:113px;height:5px;background:#c4d4ea"></div>

<!-- 07_taskbar.html -->
<div class="a" style="left:0;top:824px;width:1540px;height:40px;background:#06060e"></div>
<div class="a" style="left:1010px;top:824px;width:100px;height:40px;background:#3a3d45"></div>
<div class="a" style="left:1110px;top:824px;width:101px;height:40px;background:#a4571f"></div>
<svg style="left:16px;top:836px" width="17" height="17" viewBox="0 0 17 17"><path d="M0 2.400l7-1v6.800H0zM8 1.300l9-1.300v8.200H8zM0 9.200h7V16l-7-1zM8 9.200h9V17l-9-1.300z" fill="#fff"/></svg>
<svg style="left:62px;top:836px" width="21" height="16" viewBox="0 0 21 16" fill="none" stroke="#fff" stroke-width="1.200"><rect x="4.500" y="1.500" width="12" height="13"/><path d="M2.500 3.500h-2v9h2M18.500 3.500h2v9h-2"/></svg>
<div class="a" style="left:102px;top:861px;width:93px;height:3px;background:#8db6e4"></div>
<div class="a" style="left:204px;top:861px;width:93px;height:3px;background:#8db6e4"></div>
<div class="a" style="left:305px;top:861px;width:93px;height:3px;background:#8db6e4"></div>
<div class="a" style="left:408px;top:861px;width:93px;height:3px;background:#8db6e4"></div>
<div class="a" style="left:509px;top:861px;width:93px;height:3px;background:#8db6e4"></div>
<div class="a" style="left:611px;top:861px;width:93px;height:3px;background:#8db6e4"></div>
<div class="a" style="left:713px;top:861px;width:93px;height:3px;background:#8db6e4"></div>
<div class="a" style="left:814px;top:861px;width:93px;height:3px;background:#8db6e4"></div>
<div class="a" style="left:916px;top:861px;width:93px;height:3px;background:#8db6e4"></div>
<div class="a" style="left:1010px;top:861px;width:100px;height:3px;background:#8db6e4"></div>
<div class="a" style="left:1212px;top:861px;width:96px;height:3px;background:#8db6e4"></div>
<div class="a" style="left:1110px;top:861px;width:101px;height:3px;background:#f07a1a"></div>
<svg style="left:107px;top:835px" width="22" height="20" viewBox="0 0 22 20"><rect x="9" y="3" width="13" height="13" fill="#dce9f7"/><path d="M9 4l6.500 5L22 4" fill="none" stroke="#1a6fc4" stroke-width="1.200"/><rect x="0" y="1" width="13" height="18" fill="#1066b8"/><ellipse cx="6.500" cy="10" rx="3" ry="4" fill="none" stroke="#fff" stroke-width="1.800"/></svg>
<div class="t" style="left:132px;top:838px;font-size:12.1px;font-weight:500;color:#fff;transform:scaleX(1);transform-origin:0 0">收件箱 - ...</div>
<svg style="left:208px;top:834px" width="22" height="22" viewBox="0 0 22 22"><circle cx="11" cy="11" r="10.500" fill="#f06a1a"/><circle cx="11" cy="10" r="6" fill="#3a4ad0"/><path d="M2 8c2-5 8-7 13-4-4 0-6 2-5 5 2 0 3 1 3 3-2 2-6 1-7-2z" fill="#f8b020"/><path d="M1 12c1 5 6 9 12 8-5 0-9-4-9-9z" fill="#e03a1a"/></svg>
<div class="t" style="left:233px;top:838px;font-size:12.1px;font-weight:500;color:#fff;transform:scaleX(1);transform-origin:0 0">如何将任...</div>
<svg style="left:309px;top:833px" width="24" height="24" viewBox="0 0 24 24"><ellipse cx="11" cy="7" rx="9" ry="6" fill="#d8d8e0" stroke="#889"/><path d="M8 10l8 12M15 10l-7 12" stroke="#4a90c0" stroke-width="2"/><circle cx="15" cy="9" r="3" fill="#e07080"/></svg>
<div class="t" style="left:336px;top:838px;font-size:12.1px;font-weight:500;color:#fff;transform:scaleX(0.98);transform-origin:0 0">截图工具</div>
<svg style="left:411px;top:832px" width="26" height="26" viewBox="0 0 26 26"><path d="M13 5a8.500 8.500 0 1 0 8 11h-5a4 4 0 0 1-7-2h12.500A8.500 8.500 0 0 0 13 5zm-4 6a4 4 0 0 1 8 0z" fill="#3aa0e8"/><path d="M3 22C-1 14 8 4 18 3c4-1 6 1 4 5" fill="none" stroke="#f0c030" stroke-width="1.800"/></svg>
<div class="t" style="left:438px;top:837px;font-size:13.6px;font-weight:400;color:#fff;transform:scaleX(0.975);transform-origin:0 0">optimiz...</div>
<svg style="left:513px;top:835px" width="22" height="20" viewBox="0 0 22 20"><rect x="9" y="2" width="12" height="16" fill="#fff" stroke="#1e7a44"/><path d="M12 5h7M12 8h7M12 11h7M12 14h7" stroke="#1e7a44"/><rect x="0" y="1" width="13" height="18" fill="#1e7a44"/><path d="M3.500 5.500l6 9M9.500 5.500l-6 9" stroke="#fff" stroke-width="1.800"/></svg>
<div class="t" style="left:539px;top:837px;font-size:13.6px;font-weight:400;color:#fff;transform:scaleX(0.895);transform-origin:0 0">Excel 20...</div>
<svg style="left:614px;top:834px" width="24" height="20" viewBox="0 0 24 20"><path d="M0 2h9l2 3h13v15H0z" fill="#f5d06a"/><rect x="0" y="8" width="24" height="12" fill="#f8dc84"/><rect x="6" y="11" width="12" height="6" fill="#3a90c8"/><rect x="6" y="16" width="12" height="4" fill="#58b0d8"/></svg>
<div class="t" style="left:641px;top:838px;font-size:12.1px;font-weight:500;color:#fff;transform:scaleX(0.975);transform-origin:0 0">文件资源...</div>
<svg style="left:716px;top:835px" width="22" height="20" viewBox="0 0 22 20"><rect x="9" y="2" width="12" height="16" fill="#fff" stroke="#2a5699"/><path d="M12 5h7M12 8h7M12 11h7M12 14h7" stroke="#2a5699"/><rect x="0" y="1" width="13" height="18" fill="#2a5699"/><path d="M2.500 6l2 8 2-7 2 7 2-8" stroke="#fff" stroke-width="1.400" fill="none"/></svg>
<div class="t" style="left:741px;top:837px;font-size:13.6px;font-weight:400;color:#fff;transform:scaleX(0.965);transform-origin:0 0">Word 2...</div>
<svg style="left:815px;top:833px" width="25" height="24" viewBox="0 0 25 24"><path d="M.5 24L7.500 1.500Q8 0 9.500 0h6q1.500 0 2 1.500L24.500 24z" fill="#f5c400"/><path d="M8.800 1.500h7.400L22.800 23h-5.600L12.500 7.500 7.800 23H2.200z" fill="#111"/></svg>
<div class="t" style="left:843px;top:837px;font-size:13.6px;font-weight:400;color:#fff;transform:scaleX(0.845);transform-origin:0 0">ANSYS ...</div>
<svg style="left:917px;top:833px" width="22" height="24" viewBox="0 0 22 24"><path d="M3 1h12l6 6v16H3z" fill="#fff" stroke="#ccc"/><rect x="0" y="1" width="13" height="6" fill="#d02020"/><path d="M8 20c3-6 5-10 4-12-2 0 0 8 7 9" fill="none" stroke="#d02020" stroke-width="1.300"/></svg>
<div class="t" style="left:944px;top:837px;font-size:13.6px;font-weight:400;color:#fff;transform:scaleX(0.86);transform-origin:0 0">HFSS O...</div>
<svg style="left:1016px;top:833px" width="25" height="24" viewBox="0 0 25 24"><path d="M.5 24L7.500 1.500Q8 0 9.500 0h6q1.500 0 2 1.500L24.500 24z" fill="#f5c400"/><path d="M8.800 1.500h7.400L22.800 23h-5.600L12.500 7.500 7.800 23H2.200z" fill="#111"/></svg>
<div class="t" style="left:1043px;top:837px;font-size:13.6px;font-weight:400;color:#fff;transform:scaleX(0.845);transform-origin:0 0">ANSYS ...</div>
<svg style="left:1116px;top:834px" width="26" height="22" viewBox="0 0 26 22"><ellipse cx="9" cy="8" rx="9" ry="7.500" fill="#6cc02a"/><ellipse cx="18" cy="14" rx="7.500" ry="6.500" fill="#e8f4e0"/><circle cx="6" cy="6" r="1.200" fill="#2a5a10"/><circle cx="12" cy="6" r="1.200" fill="#2a5a10"/><circle cx="15.500" cy="12.500" r="1" fill="#555"/><circle cx="20.500" cy="12.500" r="1" fill="#555"/></svg>
<div class="t" style="left:1145px;top:838px;font-size:12.1px;font-weight:500;color:#fff;transform:scaleX(1);transform-origin:0 0">微信</div>
<svg style="left:1219px;top:835px" width="23" height="20" viewBox="0 0 23 20"><rect x=".5" y=".5" width="22" height="19" fill="#f4f4f4" stroke="#aaa"/><rect x="2" y="3" width="12" height="15" fill="#4a8f88"/><rect x="16" y="3" width="5" height="15" fill="#e0e4ee"/><rect x="17" y="9" width="3" height="3" fill="#889"/></svg>
<div class="t" style="left:1246px;top:838px;font-size:12.1px;font-weight:500;color:#fff;transform:scaleX(0.97);transform-origin:0 0">步骤记录...</div>
<svg style="left:1319px;top:840px" width="14" height="9" viewBox="0 0 14 9"><path d="M1 8l6-6.500L13 8" fill="none" stroke="#fff" stroke-width="1.300"/></svg>
<svg style="left:1342px;top:837px" width="17" height="15" viewBox="0 0 17 15"><ellipse cx="6.500" cy="5.500" rx="6.500" ry="5.500" fill="#6cc02a"/><ellipse cx="11.500" cy="9.500" rx="5.500" ry="4.500" fill="#e8f4e0"/></svg>
<svg style="left:1368px;top:837px" width="14" height="14" viewBox="0 0 14 14" fill="none" stroke="#fff" stroke-width="1.300"><path d="M1 12.500A11.500 11.500 0 0 1 12.500 1" stroke="#9a9a9a"/><path d="M4.500 12.500a8 8 0 0 1 8-8"/><path d="M8 12.500a4.500 4.500 0 0 1 4.500-4.500"/><circle cx="11.800" cy="12" r="1.400" fill="#fff" stroke="none"/></svg>
<svg style="left:1389px;top:838px" width="18" height="12" viewBox="0 0 18 12"><rect x="4.200" y="2.700" width="12.600" height="8" fill="none" stroke="#fff" stroke-width="1.400"/><rect x="6" y="4.500" width="9" height="4.400" fill="#fff"/><path d="M1.500 0v2.500M3.500 0v2.500M.5 2.500h4v2h-4zM2.500 4.500v2h2" fill="none" stroke="#fff" stroke-width="1"/></svg>
<svg style="left:1414px;top:837px" width="15" height="17" viewBox="0 0 15 17"><path d="M0 0h15v13H9l-3 3.500V13H0z" fill="#fff"/><path d="M3 4h9M3 7h9M3 10h6" stroke="#0c0e15" stroke-width="1.200"/></svg>
<div class="t" style="left:1438px;top:838px;font-size:13.500px;color:#fff;font-weight:700">英</div>
<div class="t" style="left:1461px;top:828px;width:66px;text-align:center;font-size:13.600px;color:#fff;transform:scaleX(.93)">21:16</div>
<div class="t" style="left:1456px;top:846px;width:76px;text-align:center;font-size:13.600px;color:#fff">2017/11/19</div>

<!-- 10_dialog.html -->
<div class="a" style="left:519px;top:157px;width:498px;height:505px;background:#f4f4f4;border:1px solid #b4b4b4;box-shadow:0 2px 8px rgba(0,0,0,.25)"></div>
<div class="a" style="left:315px;top:165px;width:907px;height:489px;background:#f0f0f0;border:1px solid #b4b4b4;box-shadow:0 2px 12px rgba(0,0,0,.24),inset 0 0 0 3px #fafafa;overflow:hidden" id="dlg">
<div class="a" style="left:0px;top:0px;width:905px;height:29px;background:#fff"></div>
<div class="t" style="left:6px;top:7px;font-size:14px;color:#b0b0b0;transform:scaleX(.94);transform-origin:0 0">Properties: corporate_feed - Circuit1</div>
<svg style="left:883px;top:7px" width="12" height="12" viewBox="0 0 12 12"><path d="M1 1l10 10M11 1L1 11" stroke="#8a8a8a" stroke-width="1.100"/></svg>
<div class="a" style="left:8px;top:37px;width:111px;height:23px;background:#f0f0f0;border-left:1px solid #fff;border-top:1px solid #fff;border-right:1px solid #6a6a6a"></div>
<div class="t" style="left:13px;top:40px;font-size:13.6px;transform:scaleX(.93);transform-origin:0 0">Parameter Values</div>
<div class="a" style="left:7px;top:59px;width:892px;height:384px;border:1px solid #fff;border-right-color:#6a6a6a;border-bottom-color:#6a6a6a;box-shadow:inset -1px -1px 0 #a0a0a0"></div>
<div class="a" style="left:9px;top:59px;width:109px;height:2px;background:#f0f0f0"></div>
<div class="a" style="left:45px;top:80px;width:814px;height:300px;background:#fff;border:1px solid #6f6f6f;border-right-color:#e8e8e8;border-bottom-color:#e8e8e8"></div>
<div class="a" style="left:46px;top:81px;width:797px;height:280px;overflow:hidden" id="grid">
<div class="a" style="left:0px;top:0px;width:797px;height:21px;background:#f0f0f0"></div>
<div class="a" style="left:0px;top:0px;width:16px;height:21px;border:1px solid #fff;border-right-color:#6f6f6f;border-bottom-color:#6f6f6f;background:#f0f0f0"></div>
<div class="a" style="left:16px;top:0px;width:67px;height:21px;border:1px solid #fff;border-right-color:#6f6f6f;border-bottom-color:#6f6f6f;background:#f0f0f0"></div>
<div class="t" style="left:16px;width:66px;text-align:center;top:4px;font-size:13.400px;transform:scaleX(0.97)">Name</div>
<div class="a" style="left:83px;top:0px;width:503px;height:21px;border:1px solid #fff;border-right-color:#6f6f6f;border-bottom-color:#6f6f6f;background:#f0f0f0"></div>
<div class="t" style="left:83px;width:502px;text-align:center;top:4px;font-size:13.400px;transform:scaleX(0.97)">Value</div>
<div class="a" style="left:586px;top:0px;width:34px;height:21px;border:1px solid #fff;border-right-color:#6f6f6f;border-bottom-color:#6f6f6f;background:#f0f0f0"></div>
<div class="t" style="left:586px;width:33px;text-align:center;top:4px;font-size:13.400px;transform:scaleX(0.97)">Unit</div>
<div class="a" style="left:620px;top:0px;width:71px;height:21px;border:1px solid #fff;border-right-color:#6f6f6f;border-bottom-color:#6f6f6f;background:#f0f0f0"></div>
<div class="t" style="left:620px;width:70px;text-align:center;top:4px;font-size:13.400px;transform:scaleX(0.92)">Evaluated...</div>
<div class="a" style="left:691px;top:0px;width:107px;height:21px;border:1px solid #fff;border-right-color:#6f6f6f;border-bottom-color:#6f6f6f;background:#f0f0f0"></div>
<div class="a" style="left:0px;top:21px;width:797px;height:1px;background:#6f6f6f"></div>
<div class="a" style="left:0px;top:22px;width:16px;height:22px;background:#f0f0f0;border-right:1px solid #6f6f6f;border-bottom:1px solid #6f6f6f;border-top:1px solid #fff;border-left:1px solid #fff"></div>
<div class="a" style="left:16px;top:43px;width:781px;height:1px;background:#d4d4d4"></div>
<div class="t" style="left:18px;top:25px;font-size:13.4px;color:#111;transform:scaleX(1);transform-origin:0 0">val18</div>
<div class="t" style="left:85px;top:25px;font-size:13.4px;">0</div>
<div class="t" style="left:588px;top:25px;font-size:13.4px;">V</div>
<div class="t" style="left:622px;top:25px;font-size:13.4px;">0V</div>
<div class="t" style="left:693px;top:25px;font-size:13.4px;transform:scaleX(.985);transform-origin:0 0">Value at the corre</div>
<div class="a" style="left:0px;top:44px;width:16px;height:21px;background:#f0f0f0;border-right:1px solid #6f6f6f;border-bottom:1px solid #6f6f6f;border-top:1px solid #fff;border-left:1px solid #fff"></div>
<div class="a" style="left:16px;top:64px;width:781px;height:1px;background:#d4d4d4"></div>
<div class="t" style="left:18px;top:47px;font-size:13.4px;color:#111;transform:scaleX(1);transform-origin:0 0">time19</div>
<div class="t" style="left:85px;top:47px;font-size:13.4px;">0</div>
<div class="t" style="left:588px;top:47px;font-size:13.4px;">s</div>
<div class="t" style="left:622px;top:47px;font-size:13.4px;">0s</div>
<div class="t" style="left:693px;top:47px;font-size:13.4px;transform:scaleX(.985);transform-origin:0 0">Timepoint value w</div>
<div class="a" style="left:0px;top:65px;width:16px;height:22px;background:#f0f0f0;border-right:1px solid #6f6f6f;border-bottom:1px solid #6f6f6f;border-top:1px solid #fff;border-left:1px solid #fff"></div>
<div class="a" style="left:16px;top:86px;width:781px;height:1px;background:#d4d4d4"></div>
<div class="t" style="left:18px;top:68px;font-size:13.4px;color:#111;transform:scaleX(1);transform-origin:0 0">val19</div>
<div class="t" style="left:85px;top:68px;font-size:13.4px;">0</div>
<div class="t" style="left:588px;top:68px;font-size:13.4px;">V</div>
<div class="t" style="left:622px;top:68px;font-size:13.4px;">0V</div>
<div class="t" style="left:693px;top:68px;font-size:13.4px;transform:scaleX(.985);transform-origin:0 0">Value at the corre</div>
<div class="a" style="left:0px;top:87px;width:16px;height:21px;background:#f0f0f0;border-right:1px solid #6f6f6f;border-bottom:1px solid #6f6f6f;border-top:1px solid #fff;border-left:1px solid #fff"></div>
<div class="a" style="left:16px;top:107px;width:781px;height:1px;background:#d4d4d4"></div>
<div class="t" style="left:18px;top:90px;font-size:13.4px;color:#111;transform:scaleX(1);transform-origin:0 0">time20</div>
<div class="t" style="left:85px;top:90px;font-size:13.4px;">0</div>
<div class="t" style="left:588px;top:90px;font-size:13.4px;">s</div>
<div class="t" style="left:622px;top:90px;font-size:13.4px;">0s</div>
<div class="t" style="left:693px;top:90px;font-size:13.4px;transform:scaleX(.985);transform-origin:0 0">Timepoint value w</div>
<div class="a" style="left:0px;top:108px;width:16px;height:22px;background:#f0f0f0;border-right:1px solid #6f6f6f;border-bottom:1px solid #6f6f6f;border-top:1px solid #fff;border-left:1px solid #fff"></div>
<div class="a" style="left:16px;top:129px;width:781px;height:1px;background:#d4d4d4"></div>
<div class="t" style="left:18px;top:111px;font-size:13.4px;color:#111;transform:scaleX(1);transform-origin:0 0">val20</div>
<div class="t" style="left:85px;top:111px;font-size:13.4px;">0</div>
<div class="t" style="left:588px;top:111px;font-size:13.4px;">V</div>
<div class="t" style="left:622px;top:111px;font-size:13.4px;">0V</div>
<div class="t" style="left:693px;top:111px;font-size:13.4px;transform:scaleX(.985);transform-origin:0 0">Value at the corre</div>
<div class="a" style="left:0px;top:130px;width:16px;height:22px;background:#f0f0f0;border-right:1px solid #6f6f6f;border-bottom:1px solid #6f6f6f;border-top:1px solid #fff;border-left:1px solid #fff"></div>
<div class="a" style="left:16px;top:151px;width:781px;height:1px;background:#d4d4d4"></div>
<div class="t" style="left:18px;top:133px;font-size:13.4px;color:#111;transform:scaleX(0.92);transform-origin:0 0">CosimDe...</div>
<div class="a" style="left:84px;top:131px;width:500px;height:19px;background:#f0f0f0;border:1px solid #fff;border-right-color:#777;border-bottom-color:#777;box-shadow:0 1px 0 #999"></div>
<div class="a" style="left:0px;top:152px;width:16px;height:21px;background:#f0f0f0;border-right:1px solid #6f6f6f;border-bottom:1px solid #6f6f6f;border-top:1px solid #fff;border-left:1px solid #fff"></div>
<div class="a" style="left:16px;top:172px;width:781px;height:1px;background:#d4d4d4"></div>
<div class="t" style="left:18px;top:155px;font-size:13.4px;color:#111;transform:scaleX(0.91);transform-origin:0 0">CoSimula...</div>
<div class="t" style="left:85px;top:155px;font-size:13.4px;">DefaultNetlist</div>
<div class="a" style="left:16px;top:173px;width:781px;height:21px;background:#3399ff"></div>
<div class="a" style="left:0px;top:173px;width:16px;height:22px;background:#f0f0f0;border-right:1px solid #6f6f6f;border-bottom:1px solid #6f6f6f;border-top:1px solid #fff;border-left:1px solid #fff"></div>
<div class="a" style="left:16px;top:194px;width:781px;height:1px;background:#d4d4d4"></div>
<div class="t" style="left:18px;top:176px;font-size:13.4px;color:#fff;transform:scaleX(0.84);transform-origin:0 0">PWLFILE</div>
<div class="a" style="left:84px;top:174px;width:500px;height:19px;background:#f0f0f0;border:1px solid #fff;border-right-color:#777;border-bottom-color:#777;box-shadow:0 1px 0 #999;outline:1px solid #3399ff"></div>
<div class="a" style="left:0px;top:195px;width:16px;height:21px;background:#f0f0f0;border-right:1px solid #6f6f6f;border-bottom:1px solid #6f6f6f;border-top:1px solid #fff;border-left:1px solid #fff"></div>
<div class="a" style="left:16px;top:215px;width:781px;height:1px;background:#d4d4d4"></div>
<div class="t" style="left:18px;top:198px;font-size:13.4px;color:#111;transform:scaleX(1);transform-origin:0 0">Noise</div>
<div class="a" style="left:84px;top:196px;width:500px;height:18px;background:#f0f0f0;border:1px solid #fff;border-right-color:#777;border-bottom-color:#777;box-shadow:0 1px 0 #999"></div>
<div class="a" style="left:0px;top:216px;width:16px;height:22px;background:#f0f0f0;border-right:1px solid #6f6f6f;border-bottom:1px solid #6f6f6f;border-top:1px solid #fff;border-left:1px solid #fff"></div>
<div class="a" style="left:16px;top:237px;width:781px;height:1px;background:#d4d4d4"></div>
<div class="t" style="left:18px;top:219px;font-size:13.4px;color:#111;transform:scaleX(0.95);transform-origin:0 0">PWLData</div>
<div class="a" style="left:84px;top:217px;width:500px;height:19px;background:#f0f0f0;border:1px solid #fff;border-right-color:#777;border-bottom-color:#777;box-shadow:0 1px 0 #999"></div>
<div class="a" style="left:0px;top:238px;width:16px;height:22px;background:#f0f0f0;border-right:1px solid #6f6f6f;border-bottom:1px solid #6f6f6f;border-top:1px solid #fff;border-left:1px solid #fff"></div>
<div class="a" style="left:16px;top:259px;width:781px;height:1px;background:#d4d4d4"></div>
<div class="t" style="left:18px;top:241px;font-size:13.4px;color:#111;transform:scaleX(0.97);transform-origin:0 0">Netlist</div>
<div class="t" style="left:85px;top:241px;font-size:13.4px;transform:scaleX(.925);transform-origin:0 0">V@ID %0 %1 *DC(DC=@DC) PWL(~PWLFILE(?time1(@time1) ?time1(@val1) *time2(...</div>
<div class="a" style="left:82px;top:22px;width:1px;height:237px;background:#d4d4d4"></div>
<div class="a" style="left:585px;top:22px;width:1px;height:237px;background:#d4d4d4"></div>
<div class="a" style="left:619px;top:22px;width:1px;height:237px;background:#d4d4d4"></div>
<div class="a" style="left:690px;top:22px;width:1px;height:237px;background:#d4d4d4"></div>
<div class="a" style="left:585px;top:173px;width:1px;height:21px;background:#66b0ff"></div>
<div class="a" style="left:619px;top:173px;width:1px;height:21px;background:#66b0ff"></div>
<div class="a" style="left:690px;top:173px;width:1px;height:21px;background:#66b0ff"></div>
</div>
<div class="a" style="left:843px;top:81px;width:16px;height:280px;background:#f1f1f1"></div>
<div class="a" style="left:844px;top:292px;width:14px;height:52px;background:#cdcdcd"></div>
<svg style="left:846px;top:85px" width="10" height="10" viewBox="0 0 10 10"><path d="M1 6.500l4-4 4 4" fill="none" stroke="#333" stroke-width="1.5"/></svg>
<svg style="left:846px;top:347px" width="10" height="10" viewBox="0 0 10 10"><path d="M1 2.500l4 4 4-4" fill="none" stroke="#333" stroke-width="1.5"/></svg>
<div class="a" style="left:46px;top:362px;width:813px;height:17px;background:#f1f1f1"></div>
<div class="a" style="left:62px;top:363px;width:565px;height:15px;background:#cdcdcd"></div>
<svg style="left:48px;top:365px" width="10" height="10" viewBox="0 0 10 10"><path d="M6.500 1l-4 4 4 4" fill="none" stroke="#333" stroke-width="1.5"/></svg>
<svg style="left:828px;top:365px" width="10" height="10" viewBox="0 0 10 10"><path d="M3.500 1l4 4-4 4" fill="none" stroke="#333" stroke-width="1.5"/></svg>
<div class="a" style="left:708px;top:399px;width:12px;height:12px;background:#fff;border:1px solid #6a6a6a;border-right-color:#e8e8e8;border-bottom-color:#e8e8e8"></div>
<div class="t" style="left:725px;top:399px;font-size:13.6px;transform:scaleX(.97);transform-origin:0 0">Show Hidden</div>
<div class="a" style="left:615px;top:451px;width:89px;height:28px;background:#f0f0f0;border:1px solid #fff;border-right-color:#6e6e6e;border-bottom-color:#6e6e6e;box-shadow:inset -1px -1px 0 #a8a8a8"></div><div class="t" style="left:615px;width:89px;text-align:center;top:458px;font-size:13px;color:#111">确定</div>
<div class="a" style="left:712px;top:451px;width:90px;height:28px;background:#f0f0f0;border:1px solid #fff;border-right-color:#6e6e6e;border-bottom-color:#6e6e6e;box-shadow:inset -1px -1px 0 #a8a8a8"></div><div class="t" style="left:712px;width:90px;text-align:center;top:458px;font-size:13px;color:#111">取消</div>
<div class="a" style="left:810px;top:451px;width:89px;height:28px;background:#f0f0f0;border:1px solid #fff;border-right-color:#6e6e6e;border-bottom-color:#6e6e6e;box-shadow:inset -1px -1px 0 #a8a8a8"></div><div class="t" style="left:810px;width:89px;text-align:center;top:458px;font-size:13px;color:#a0a0a0">应用(A)</div>
</div>

<!-- 11_selectfile.html -->
<div class="a" style="left:586px;top:335px;width:363px;height:147px;background:#f0f0f0;border:1px solid #8fa0b4;box-shadow:0 3px 12px rgba(0,0,0,.35);overflow:hidden" id="sf">
<div class="a" style="left:0px;top:0px;width:361px;height:30px;background:#fff"></div>
<div class="t" style="left:7px;top:8px;font-size:13.8px;color:#222;transform:scaleX(.916);transform-origin:0 0">Select File</div>
<svg style="left:339px;top:8px" width="12" height="12" viewBox="0 0 12 12"><path d="M1 1l10 10M11 1L1 11" stroke="#333" stroke-width="1.200"/></svg>
<div class="a" style="left:11px;top:40px;width:251px;height:22px;background:#fff;border:1px solid #7a7a7a;border-right-color:#e8e8e8;border-bottom-color:#e8e8e8;box-shadow:inset 1px 1px 0 #555"></div>
<div class="a" style="left:272px;top:42px;width:77px;height:19px;background:#f0f0f0;border:1px solid #fff;border-right-color:#6e6e6e;border-bottom-color:#6e6e6e;box-shadow:inset -1px -1px 0 #a8a8a8"></div><div class="t" style="left:272px;width:77px;text-align:center;top:46px;font-size:10.800px;color:#111">Browse</div>
<div class="a" style="left:268px;top:38px;width:84px;height:27px;border:5px solid #22e03c"></div>
<div class="a" style="left:271px;top:71px;width:80px;height:23px;background:#f0f0f0;border:1px solid #fff;border-right-color:#6e6e6e;border-bottom-color:#6e6e6e;box-shadow:inset -1px -1px 0 #a8a8a8"></div><div class="t" style="left:271px;width:80px;text-align:center;top:77px;font-size:10.800px;color:#111">Clear</div>
<div class="a" style="left:96px;top:112px;width:80px;height:24px;background:#444"></div>
<div class="a" style="left:97px;top:113px;width:78px;height:22px;background:#f0f0f0;border:1px solid #fff;border-right-color:#6e6e6e;border-bottom-color:#6e6e6e;box-shadow:inset -1px -1px 0 #a8a8a8"></div><div class="t" style="left:97px;width:78px;text-align:center;top:118px;font-size:10.800px;color:#111">OK</div>
<div class="a" style="left:186px;top:112px;width:80px;height:24px;background:#f0f0f0;border:1px solid #fff;border-right-color:#6e6e6e;border-bottom-color:#6e6e6e;box-shadow:inset -1px -1px 0 #a8a8a8"></div><div class="t" style="left:186px;width:80px;text-align:center;top:118px;font-size:10.800px;color:#111">Cancel</div>
</div>

<!-- 12_recorder.html -->
<div class="a" style="left:70px;top:65px;width:338px;height:59px;background:#fff;border:1px solid #c8ccd4;box-shadow:0 2px 8px rgba(0,0,0,.3)" id="rec">
<svg style="left:5px;top:6px" width="16" height="14" viewBox="0 0 16 14"><rect x=".5" y=".5" width="15" height="13" fill="#f6f6f6" stroke="#c0c0c0"/><rect x="2" y="2.500" width="7" height="9" fill="#5a9a90"/><rect x="11" y="3" width="3" height="5" fill="#dfe3ee"/><circle cx="12.500" cy="11" r="1.800" fill="#e03040"/></svg>
<div class="t" style="left:26px;top:6px;font-size:12.2px;color:#b8b8b8">步骤记录器 - 现在正在录制</div>
<svg style="left:213px;top:7px" width="106" height="12" viewBox="0 0 106 12" fill="none"><path d="M1 6h10" stroke="#b0b0b0"/><rect x="47.500" y="1.500" width="9" height="9" stroke="#ececec"/><path d="M95 1l9 9M104 1l-9 9" stroke="#a8a8a8"/></svg>
<div class="a" style="left:0px;top:28px;width:336px;height:1px;background:#e4e4e4"></div>
<svg style="left:2px;top:35px" width="16" height="16" viewBox="0 0 16 16"><circle cx="8" cy="8" r="7.300" fill="#f4f8fc" stroke="#8a98a8"/><circle cx="8" cy="8" r="5.500" fill="#eaf2fb" stroke="#c8d4e0" stroke-width=".6"/><path d="M6 4.500v7M10 4.500v7" stroke="#2a7fd0" stroke-width="2"/></svg>
<div class="t" style="left:21px;top:37px;font-size:12.2px;color:#111">暂停记录(<u>U</u>)</div>
<svg style="left:99px;top:35px" width="16" height="16" viewBox="0 0 16 16"><circle cx="8" cy="8" r="7.500" fill="#d8302a"/><circle cx="8" cy="8" r="7.500" fill="none" stroke="#a82018"/><rect x="4.800" y="4.800" width="6.400" height="6.400" rx="1" fill="#fff"/></svg>
<div class="t" style="left:119px;top:37px;font-size:12.2px;color:#111">停止记录(<u>O</u>)</div>
<svg style="left:198px;top:35px" width="16" height="16" viewBox="0 0 16 16"><rect x="0" y="4" width="10" height="7" fill="#3a8ad8"/><rect x="1.500" y="6.500" width="6" height="2" fill="#fff"/><path d="M9 1.500h5M9 14.500h5M11.500 1.500v13" stroke="#333" stroke-width="1.200"/></svg>
<div class="t" style="left:217px;top:37px;font-size:12.2px;color:#111">添加注释(<u>C</u>)</div>
<svg style="left:300px;top:36px" width="14" height="14" viewBox="0 0 14 14"><circle cx="7" cy="7" r="7" fill="#222"/><text x="7" y="11" font-size="11" font-weight="700" text-anchor="middle" fill="#fff" font-family="Liberation Sans,sans-serif">?</text></svg>
<svg style="left:323px;top:41px" width="8" height="5" viewBox="0 0 8 5"><path d="M0 0h8l-4 4.500z" fill="#555"/></svg>
</div>

<!-- 13_dell.html -->
<div class="a" style="left:1143px;top:730px;width:388px;height:88px;background:#fff;border:1px solid #d4d4d4" id="dell">
<svg style="left:14px;top:20px" width="56" height="47" viewBox="0 0 56 47"><path d="M9.500 .5h21v27h-1L18.500 45.300.5 27.500h9z" fill="#cbcbcb"/><path d="M50.2 26.6L54.4 27.1L54.4 32.3L50.2 32.8L49.0 35.7L51.6 39.0L47.9 42.7L44.6 40.1L41.7 41.3L41.2 45.5L36.0 45.5L35.5 41.3L32.6 40.1L29.3 42.7L25.6 39.0L28.2 35.7L27.0 32.8L22.8 32.3L22.8 27.1L27.0 26.6L28.2 23.7L25.6 20.4L29.3 16.7L32.6 19.3L35.5 18.1L36.0 13.9L41.2 13.9L41.7 18.1L44.6 19.3L47.9 16.7L51.6 20.4L49.0 23.7z" fill="#cbcbcb" stroke="#fff" stroke-width="4" stroke-linejoin="round"/><path d="M50.2 26.6L54.4 27.1L54.4 32.3L50.2 32.8L49.0 35.7L51.6 39.0L47.9 42.7L44.6 40.1L41.7 41.3L41.2 45.5L36.0 45.5L35.5 41.3L32.6 40.1L29.3 42.7L25.6 39.0L28.2 35.7L27.0 32.8L22.8 32.3L22.8 27.1L27.0 26.6L28.2 23.7L25.6 20.4L29.3 16.7L32.6 19.3L35.5 18.1L36.0 13.9L41.2 13.9L41.7 18.1L44.6 19.3L47.9 16.7L51.6 20.4L49.0 23.7z" fill="#cbcbcb" stroke="#cbcbcb" stroke-width="1.5" stroke-linejoin="round"/><circle cx="38.600" cy="29.700" r="5.200" fill="#fff"/></svg>
<div class="t" style="left:81px;top:21px;font-size:13.2px;font-weight:700;color:#333;transform:scaleX(.90);transform-origin:0 0">Dell Command | Update</div>
<div class="t" style="left:81px;top:40px;font-size:11.2px;color:#8a8a8a;letter-spacing:.52px">14 Dell 更新可用于您的系统：单击此处了解详细信</div>
<div class="t" style="left:81px;top:56px;font-size:10.9px;color:#8a8a8a">息。</div>
<svg style="left:366px;top:10px" width="11" height="11" viewBox="0 0 11 11"><path d="M1 1l9 9M10 1l-9 9" stroke="#555" stroke-width="2"/></svg>
</div>

<!-- 14_ime.html -->
<div class="a" style="left:1322px;top:645px;width:183px;height:24px;background:#fff;border:1px solid #d0d8e4;box-shadow:0 1px 3px rgba(0,0,0,.15)"></div>
<div class="a" style="left:1304px;top:644px;width:23px;height:23px;background:#e8601e;border-radius:3px;transform:rotate(-14deg)"></div>
<div class="t" style="left:1308px;top:644px;font-size:22px;font-weight:700;color:#fff;font-style:italic;transform:rotate(-8deg)">S</div>
<div class="t" style="left:1334px;top:650px;font-size:15px;font-weight:700;color:#2a6cb8">英</div>
<svg style="left:1358px;top:651px" width="12" height="12" viewBox="0 0 12 12"><circle cx="2.500" cy="3" r="1.500" fill="#2a6cb8"/><path d="M7 4c2.500 1 2.500 4 0 6" fill="none" stroke="#2a6cb8" stroke-width="1.800"/></svg>
<svg style="left:1377px;top:649px" width="17" height="17" viewBox="0 0 17 17" fill="none" stroke="#2a6cb8" stroke-width="1.400"><circle cx="8.500" cy="8.500" r="7.500"/><path d="M5 10.500c2 2.500 5 2.500 7 0"/><circle cx="6" cy="6.500" r=".8" fill="#2a6cb8"/><circle cx="11" cy="6.500" r=".8" fill="#2a6cb8"/></svg>
<svg style="left:1401px;top:648px" width="13" height="19" viewBox="0 0 13 19"><rect x="3.500" y="0" width="6" height="11" rx="3" fill="#2a6cb8"/><path d="M1 8c0 7 11 7 11 0M6.500 13.500v4M3 18h7" fill="none" stroke="#2a6cb8" stroke-width="1.500"/></svg>
<svg style="left:1420px;top:652px" width="17" height="12" viewBox="0 0 17 12"><rect x=".7" y=".7" width="15.600" height="10.600" rx="1.500" fill="#fff" stroke="#2a6cb8" stroke-width="1.400"/><path d="M3 4h11M3 6.500h11" stroke="#2a6cb8" stroke-width="1.400" stroke-dasharray="1.500 1"/><path d="M5 9h7" stroke="#2a6cb8" stroke-width="1.400"/></svg>
<svg style="left:1443px;top:650px" width="17" height="16" viewBox="0 0 17 16"><circle cx="6" cy="3.500" r="3" fill="#c4c8d0"/><path d="M0 14c0-8 12-8 12 0z" fill="#c4c8d0"/><rect x="7" y="9" width="10" height="6" fill="#b0b4bc"/></svg>
<svg style="left:1463px;top:650px" width="18" height="16" viewBox="0 0 18 16"><path d="M5 0c2 2 6 2 8 0l5 3-2 4-2-1v10H4V6L2 7 0 3z" fill="#2a6cb8"/></svg>
<svg style="left:1486px;top:650px" width="15" height="15" viewBox="0 0 15 15"><path d="M1.500 13.500l7-7" stroke="#2a6cb8" stroke-width="3" stroke-linecap="round"/><path d="M8 3a4 4 0 0 1 6-1l-3 2 1 2 3-1a4 4 0 0 1-6 2z" fill="#2a6cb8"/></svg>

<!-- 15_cursor.html -->
<svg style="left:900px;top:389px" width="12" height="19" viewBox="0 0 12 19"><path d="M.5.5v15l3.500-3.300 2.500 6 2.200-.9-2.500-5.800h5z" fill="#fff" stroke="#111" stroke-width="1"/></svg>

<!-- 16_shadow.html -->
<div class="a" style="left:1536px;top:0;width:4px;height:868px;background:linear-gradient(90deg,#1a1a1a 0,#555 40%,#cfcfcf 75%,#e4e4e4 100%)"></div>
<div class="a" style="left:0;top:864px;width:1540px;height:4px;background:linear-gradient(#1a1a1a 0,#666 35%,#c8c8c8 75%,#dedede 100%)"></div>
<div class="a" style="left:0;top:864px;width:5px;height:4px;background:linear-gradient(90deg,#f4f4f4,#bbb)"></div>
<div class="a" style="left:1536px;top:0;width:4px;height:4px;background:#eee"></div>

</body></html>
